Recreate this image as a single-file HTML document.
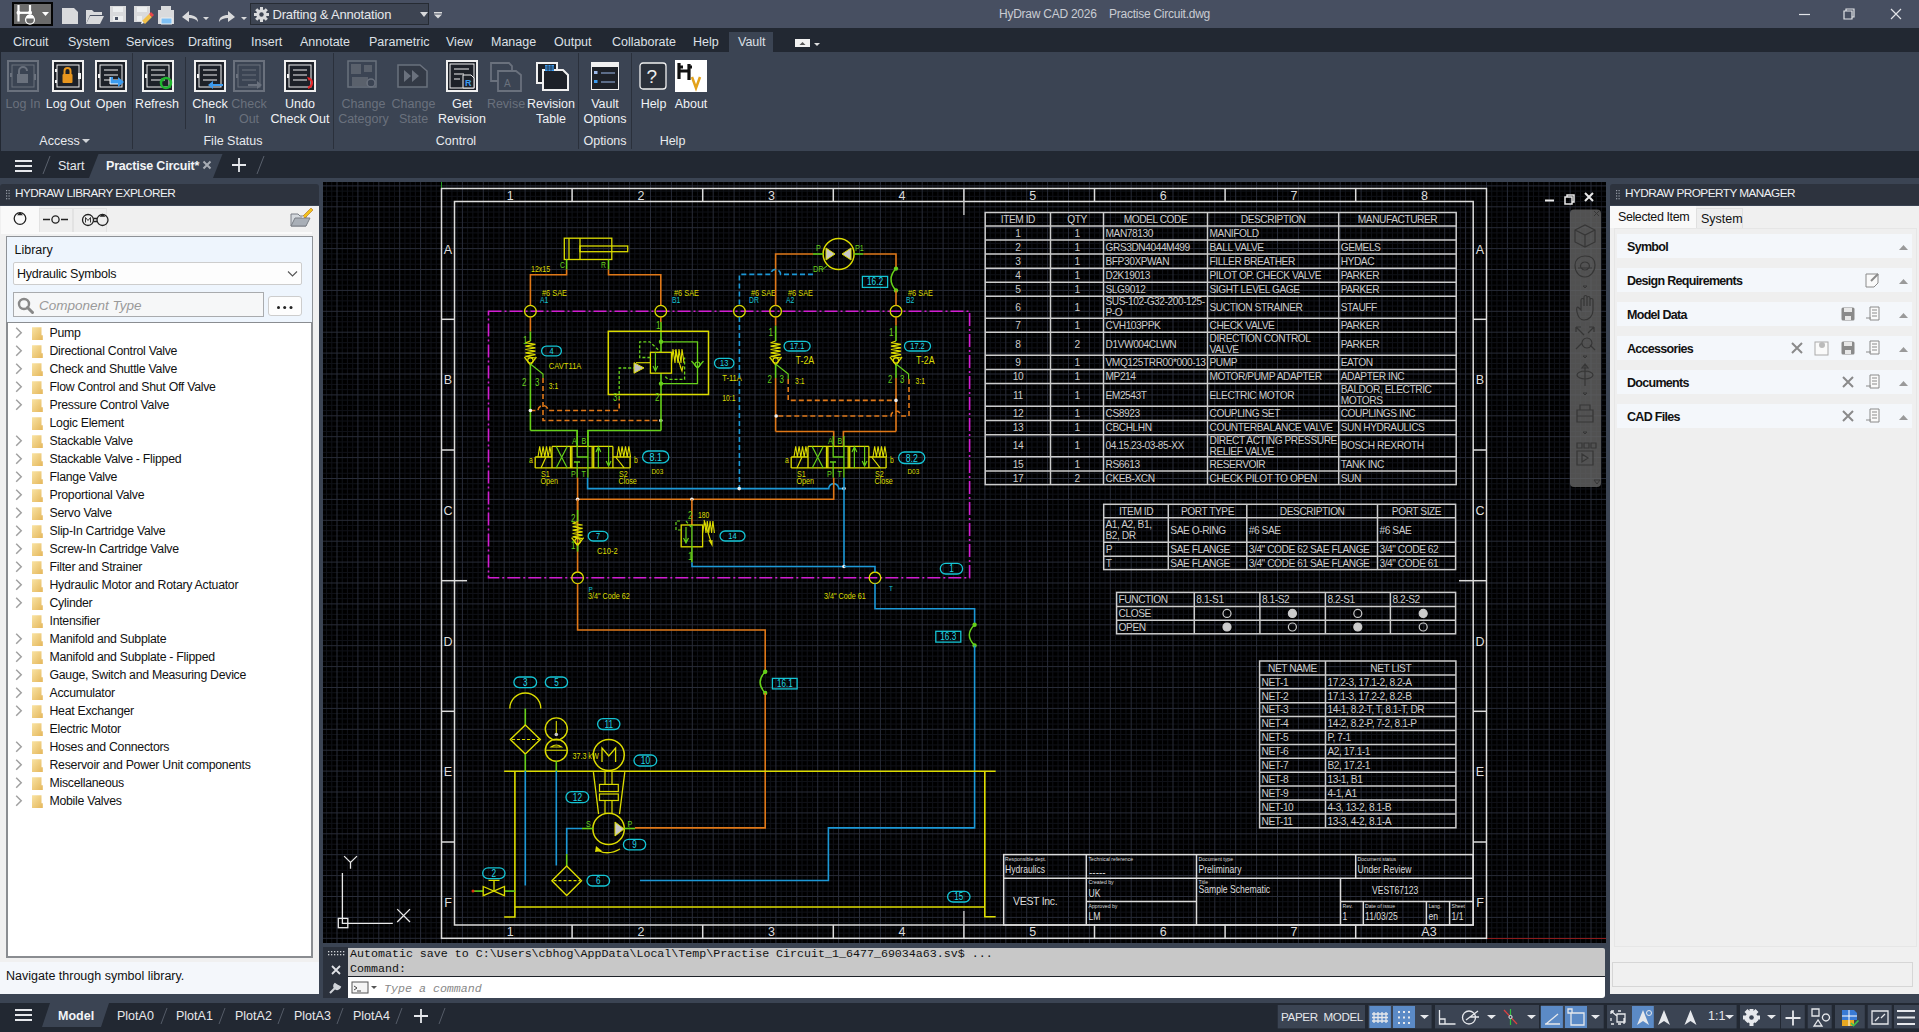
<!DOCTYPE html><html><head><meta charset="utf-8"><style>
*{margin:0;padding:0;box-sizing:border-box}
html,body{width:1919px;height:1032px;overflow:hidden;background:#3b4453;font-family:"Liberation Sans",sans-serif}
.a{position:absolute}
.t{position:absolute;white-space:nowrap;line-height:1}
</style></head><body>
<div class="a" style="left:0px;top:0px;width:1919px;height:28px;background:#474f61"></div><div class="a" style="left:12px;top:2px;width:41px;height:24px;background:#6b6b6b;border:2px solid #050505"></div><svg class="a" style="left:60px;top:4px;" width="385" height="22" viewBox="0 0 385 22"><g fill="#d9dadc">
<path d="M2 4h12l4 4v12H2z"/>
<path d="M26 6h6l2 2h8v3H30l-4 9z"/><path d="M30 12h14l-4 8H26z"/>
<path d="M50 2h16v16H50z"/>
<path d="M74 2h16v11l-5 5H74z"/>
<path d="M98 6h16v14H98z"/><path d="M101 2h10v4h-10z"/>
<path d="M122 13l7-6v4c5 0 9 2 9 7c-2-3-5-4-9-4v4z"/>
<path d="M175 13l-7-6v4c-5 0-9 2-9 7c2-3 5-4 9-4v4z"/>
</g><g fill="#eceeef"><path d="M53 3h10v5H53z"/><path d="M53 12h10v5H53z"/><path d="M77 3h10v5H77z"/><path d="M77 12h5v5h-5z"/></g>
<path d="M55 13h3v3h-3z" fill="#474f61"/>
<path d="M101 14h11v6h-11z" fill="#7fc0f4" stroke="#eceeef" stroke-width="1"/>
<path d="M143 13h6l-3 3z M181 13h6l-3 3z" fill="#d9dadc"/>
<path d="M82 17l7-7 3 3-7 7z" fill="#f2c14a"/><path d="M89 10l2-2 3 3-2 2z" fill="#e8454a"/><path d="M82 17l-1 3 3-1z" fill="#fff"/></svg><svg class="a" style="left:12px;top:2px;" width="41" height="24" viewBox="0 0 41 24"><g stroke="#fff" fill="none"><path d="M6.5 3v16.5M18 3v9" stroke-width="2.2"/><path d="M5 10.8h14.5" stroke-width="2.2"/><circle cx="18" cy="17.8" r="4.4" stroke-width="1.3"/></g><circle cx="6.5" cy="10.8" r="2" fill="#fff"/><circle cx="18" cy="10.8" r="2" fill="#fff"/><path d="M14 16.5h8a4 4 0 0 0 -8 0z" fill="#fff"/><path d="M30 10h7l-3.5 4z" fill="#fff"/></svg><div class="a" style="left:250px;top:3px;width:179px;height:22px;background:#3d4452;border:1px solid #262b33"></div><svg class="a" style="left:253px;top:6px;" width="17" height="17" viewBox="0 0 17 17"><g fill="#d9dadc"><circle cx="8.5" cy="8.5" r="5.2"/><g stroke="#d9dadc" stroke-width="3"><path d="M8.5 1v15M1 8.5h15M3.2 3.2l10.6 10.6M13.8 3.2L3.2 13.8"/></g><circle cx="8.5" cy="8.5" r="2.2" fill="#3d4452"/></g></svg><div class="t" style="left:272.5px;top:8.0px;font-size:13px;color:#e6e8ec;letter-spacing:-0.2px">Drafting &amp; Annotation</div><svg class="a" style="left:418px;top:10px;" width="24" height="10" viewBox="0 0 24 10"><path d="M2 2h8l-4 5z" fill="#d9dadc"/><path d="M16 2h8v1.5h-8zM16 4.5h8l-4 4z" fill="#d9dadc"/></svg><div class="t" style="left:999px;top:8.3px;font-size:12px;color:#c9ccd3;letter-spacing:-0.25px">HyDraw CAD 2026&nbsp;&nbsp;&nbsp; Practise Circuit.dwg</div><svg class="a" style="left:1796px;top:6px;" width="110" height="16" viewBox="0 0 110 16"><g stroke="#e2e4e8" stroke-width="1.2" fill="none"><path d="M3 8.5h11"/><path d="M48 5h8v8h-8z M50 5V3h8v8h-2"/><path d="M95 3l10 10M105 3L95 13"/></g></svg><div class="a" style="left:0px;top:28px;width:1919px;height:24px;background:#222832"></div><div class="a" style="left:729px;top:32px;width:44px;height:20px;background:#3b4453"></div><div class="t" style="left:13px;top:36.2px;font-size:12.5px;color:#dde0e6">Circuit</div><div class="t" style="left:68px;top:36.2px;font-size:12.5px;color:#dde0e6">System</div><div class="t" style="left:126px;top:36.2px;font-size:12.5px;color:#dde0e6">Services</div><div class="t" style="left:188px;top:36.2px;font-size:12.5px;color:#dde0e6">Drafting</div><div class="t" style="left:251px;top:36.2px;font-size:12.5px;color:#dde0e6">Insert</div><div class="t" style="left:300px;top:36.2px;font-size:12.5px;color:#dde0e6">Annotate</div><div class="t" style="left:369px;top:36.2px;font-size:12.5px;color:#dde0e6">Parametric</div><div class="t" style="left:446px;top:36.2px;font-size:12.5px;color:#dde0e6">View</div><div class="t" style="left:491px;top:36.2px;font-size:12.5px;color:#dde0e6">Manage</div><div class="t" style="left:554px;top:36.2px;font-size:12.5px;color:#dde0e6">Output</div><div class="t" style="left:612px;top:36.2px;font-size:12.5px;color:#dde0e6">Collaborate</div><div class="t" style="left:693px;top:36.2px;font-size:12.5px;color:#dde0e6">Help</div><div class="t" style="left:738px;top:36.2px;font-size:12.5px;color:#dde0e6">Vault</div><div class="a" style="left:795px;top:39px;width:15px;height:8px;background:#f2f2f2"></div><svg class="a" style="left:795px;top:39px;" width="26" height="10" viewBox="0 0 26 10"><path d="M4.5 6h6l-3-3z" fill="#555"/><path d="M19 4h6l-3 3z" fill="#e0e0e0"/></svg><div class="a" style="left:0px;top:52px;width:1919px;height:99px;background:#3b4453"></div><div class="a" style="left:0px;top:52px;width:1px;height:99px;background:#222832"></div><div class="a" style="left:132px;top:53px;width:1px;height:96px;background:#2a303b"></div><div class="a" style="left:185px;top:57px;width:1px;height:72px;background:#2a303b"></div><div class="a" style="left:333px;top:53px;width:1px;height:96px;background:#2a303b"></div><div class="a" style="left:578px;top:53px;width:1px;height:96px;background:#2a303b"></div><div class="a" style="left:631px;top:53px;width:1px;height:96px;background:#2a303b"></div><svg class="a" style="left:7px;top:60px;" width="32" height="32" viewBox="0 0 32 32"><rect x="1" y="1" width="30" height="30" fill="#3b4453" stroke="#6a717d" stroke-width="2"/><rect x="5" y="5" width="22" height="22" fill="none" stroke="#6a717d"/><rect x="10" y="14" width="11" height="9" fill="#6a717d"/><path d="M12 14v-3a4 4 0 0 1 8 0" stroke="#6a717d" stroke-width="2" fill="none"/><path d="M3 13h2v4H3zM27 14h2v6h-2z" fill="#6a717d"/></svg><svg class="a" style="left:52px;top:60px;" width="32" height="32" viewBox="0 0 32 32"><rect x="1" y="1" width="30" height="30" fill="#1d2128" stroke="#f0f0f0" stroke-width="2"/><rect x="5" y="5" width="22" height="22" fill="none" stroke="#f0f0f0"/><rect x="10.5" y="14" width="10" height="9" rx="1" fill="#e8961e"/><path d="M12.5 14v-3a3 3 0 0 1 6 0v3" stroke="#e8961e" stroke-width="2" fill="none"/><path d="M3 9h2v3H3zM3 20h2v3H3zM26 13h3v6h-3z" fill="#f0f0f0"/></svg><svg class="a" style="left:95px;top:60px;" width="33" height="32" viewBox="0 0 33 32"><rect x="1" y="1" width="30" height="30" fill="#1d2128" stroke="#f0f0f0" stroke-width="2"/><rect x="5" y="5" width="22" height="22" fill="none" stroke="#f0f0f0" stroke-width="1"/><g stroke="#f0f0f0" stroke-width="1.2"><path d="M9 10h14M9 15h14M9 20h14"/></g><path d="M3 14h2v4H3z" fill="#f0f0f0"/><path d="M15 17v7h8v3l6-5-6-5v3h-5v-3z" fill="#3c9cf0"/><path d="M15 17v7h8" stroke="#fff" stroke-width="1" fill="none"/></svg><svg class="a" style="left:142px;top:60px;" width="32" height="32" viewBox="0 0 32 32"><rect x="1" y="1" width="30" height="30" fill="#1d2128" stroke="#f0f0f0" stroke-width="2"/><rect x="5" y="5" width="22" height="22" fill="none" stroke="#f0f0f0" stroke-width="1"/><g stroke="#f0f0f0" stroke-width="1.2"><path d="M9 10h14M9 15h14M9 20h14"/></g><path d="M3 14h2v4H3z" fill="#f0f0f0"/><circle cx="24" cy="23" r="5" fill="none" stroke="#1fb52e" stroke-width="2.5"/><path d="M19 18l4 0-2 4zM29 28l-4 0 2-4z" fill="#1fb52e"/></svg><svg class="a" style="left:194px;top:60px;" width="32" height="32" viewBox="0 0 32 32"><rect x="1" y="1" width="30" height="30" fill="#1d2128" stroke="#f0f0f0" stroke-width="2"/><rect x="5" y="5" width="22" height="22" fill="none" stroke="#f0f0f0" stroke-width="1"/><g stroke="#f0f0f0" stroke-width="1.2"><path d="M9 10h14M9 15h14M9 20h14"/></g><path d="M3 14h2v4H3z" fill="#f0f0f0"/><path d="M14 25l5-4v3h10v2H19v3z" fill="#3c9cf0"/></svg><svg class="a" style="left:233px;top:60px;" width="32" height="32" viewBox="0 0 32 32"><rect x="1" y="1" width="30" height="30" fill="#3b4453" stroke="#6a717d" stroke-width="2"/><rect x="5" y="5" width="22" height="22" fill="none" stroke="#6a717d" stroke-width="1"/><g stroke="#6a717d" stroke-width="1.2"><path d="M9 10h14M9 15h14M9 20h14"/></g><path d="M3 14h2v4H3z" fill="#6a717d"/><path d="M29 25l-5-4v3H15v2h9v3z" fill="#6a717d"/></svg><svg class="a" style="left:284px;top:60px;" width="32" height="32" viewBox="0 0 32 32"><rect x="1" y="1" width="30" height="30" fill="#1d2128" stroke="#f0f0f0" stroke-width="2"/><rect x="5" y="5" width="22" height="22" fill="none" stroke="#f0f0f0" stroke-width="1"/><g stroke="#f0f0f0" stroke-width="1.2"><path d="M9 10h14M9 15h14M9 20h14"/></g><path d="M3 14h2v4H3z" fill="#f0f0f0"/><path d="M26 19c3 2 3 7-2 9" stroke="#e8272a" stroke-width="2" fill="none"/><path d="M23 17l4 1-2 3z" fill="#e8272a"/></svg><svg class="a" style="left:347px;top:60px;" width="31" height="30" viewBox="0 0 31 30"><g fill="none" stroke="#6a717d" stroke-width="1.5"><rect x="1" y="1" width="28" height="26"/></g><g fill="#5a616c"><rect x="4" y="4" width="10" height="10"/><rect x="17" y="5" width="8" height="7"/><rect x="5" y="17" width="16" height="9"/></g><circle cx="24" cy="23" r="4" fill="none" stroke="#6a717d" stroke-width="1.5"/></svg><svg class="a" style="left:397px;top:64px;" width="32" height="24" viewBox="0 0 32 24"><path d="M1 1h22l7 6v16H1z" fill="#333a46" stroke="#6a717d" stroke-width="1.5"/><path d="M7 6l7 6-7 6zM15 6l7 6-7 6z" fill="#6a717d"/></svg><svg class="a" style="left:446px;top:60px;" width="32" height="32" viewBox="0 0 32 32"><rect x="1" y="1" width="30" height="30" fill="#1d2128" stroke="#f0f0f0" stroke-width="2"/><rect x="4" y="4" width="24" height="24" fill="none" stroke="#f0f0f0"/><g stroke="#f0f0f0" stroke-width="1"><path d="M8 9h15M8 14h10M8 19h6"/></g><path d="M17 15h8l3 3v10H17z" fill="#1d2128" stroke="#f0f0f0"/><text x="19" y="26" font-size="9" font-weight="bold" fill="#3c9cf0" font-family="Liberation Sans">R</text></svg><svg class="a" style="left:489px;top:60px;" width="34" height="32" viewBox="0 0 34 32"><g fill="none" stroke="#6a717d" stroke-width="1.8"><path d="M2 3h18l3 3v15H2z"/><path d="M9 11h18l5 4v16H9z" fill="#3b4453"/></g><text x="15" y="27" font-size="10" fill="#6a717d" font-family="Liberation Sans">A</text></svg><svg class="a" style="left:535px;top:61px;" width="34" height="31" viewBox="0 0 34 31"><path d="M2 2h20v20H2z" fill="#1d2128" stroke="#f0f0f0" stroke-width="2"/><path d="M8 9h20l5 5v15H8z" fill="#1d2128" stroke="#f0f0f0" stroke-width="2"/><g fill="#3c9cf0"><rect x="10" y="4" width="9" height="6"/></g><g stroke="#1d2128" stroke-width=".7"><path d="M10 6h9M10 8h9M13 4v6M16 4v6"/></g></svg><svg class="a" style="left:591px;top:62px;" width="28" height="28" viewBox="0 0 28 28"><rect x="0.5" y="0.5" width="27" height="27" fill="#1d2128" stroke="#f0f0f0"/><rect x="0" y="0" width="28" height="5" fill="#f0f0f0"/><rect x="3" y="9" width="3.5" height="3" fill="#9bb8e8"/><rect x="3" y="18" width="3.5" height="3" fill="#3c9cf0"/><path d="M10 11h14M10 20h14" stroke="#9bb8e8" stroke-width="1"/></svg><svg class="a" style="left:639px;top:62px;" width="28" height="28" viewBox="0 0 28 28"><rect x="1" y="1" width="26" height="26" rx="3" fill="#2a303a" stroke="#f0f0f0" stroke-width="1.3"/><text x="7.5" y="21" font-size="19" fill="#f0f0f0" font-family="Liberation Sans">?</text></svg><svg class="a" style="left:675px;top:60px;" width="32" height="32" viewBox="0 0 32 32"><rect width="32" height="32" fill="#fff"/><path d="M4 3v16M4 7h4M14 4v16M13 7h4M5 11h10" stroke="#111" stroke-width="3.2"/><path d="M17 17l4 11 4-11" stroke="#e3a21a" stroke-width="2.5" fill="none"/></svg><div class="t" style="left:-27.0px;top:97.6px;width:100px;text-align:center;font-size:12.5px;color:#6a717d">Log In</div><div class="t" style="left:18.0px;top:97.6px;width:100px;text-align:center;font-size:12.5px;color:#f0f2f5">Log Out</div><div class="t" style="left:61.0px;top:97.6px;width:100px;text-align:center;font-size:12.5px;color:#f0f2f5">Open</div><div class="t" style="left:107.0px;top:97.6px;width:100px;text-align:center;font-size:12.5px;color:#f0f2f5">Refresh</div><div class="t" style="left:160.0px;top:97.6px;width:100px;text-align:center;font-size:12.5px;color:#f0f2f5">Check</div><div class="t" style="left:160.0px;top:112.6px;width:100px;text-align:center;font-size:12.5px;color:#f0f2f5">In</div><div class="t" style="left:199.0px;top:97.6px;width:100px;text-align:center;font-size:12.5px;color:#6a717d">Check</div><div class="t" style="left:199.0px;top:112.6px;width:100px;text-align:center;font-size:12.5px;color:#6a717d">Out</div><div class="t" style="left:250.0px;top:97.6px;width:100px;text-align:center;font-size:12.5px;color:#f0f2f5">Undo</div><div class="t" style="left:250.0px;top:112.6px;width:100px;text-align:center;font-size:12.5px;color:#f0f2f5">Check Out</div><div class="t" style="left:313.5px;top:97.6px;width:100px;text-align:center;font-size:12.5px;color:#6a717d">Change</div><div class="t" style="left:313.5px;top:112.6px;width:100px;text-align:center;font-size:12.5px;color:#6a717d">Category</div><div class="t" style="left:363.5px;top:97.6px;width:100px;text-align:center;font-size:12.5px;color:#6a717d">Change</div><div class="t" style="left:363.5px;top:112.6px;width:100px;text-align:center;font-size:12.5px;color:#6a717d">State</div><div class="t" style="left:412.0px;top:97.6px;width:100px;text-align:center;font-size:12.5px;color:#f0f2f5">Get</div><div class="t" style="left:412.0px;top:112.6px;width:100px;text-align:center;font-size:12.5px;color:#f0f2f5">Revision</div><div class="t" style="left:456.0px;top:97.6px;width:100px;text-align:center;font-size:12.5px;color:#6a717d">Revise</div><div class="t" style="left:501.0px;top:97.6px;width:100px;text-align:center;font-size:12.5px;color:#f0f2f5">Revision</div><div class="t" style="left:501.0px;top:112.6px;width:100px;text-align:center;font-size:12.5px;color:#f0f2f5">Table</div><div class="t" style="left:555.0px;top:97.6px;width:100px;text-align:center;font-size:12.5px;color:#f0f2f5">Vault</div><div class="t" style="left:555.0px;top:112.6px;width:100px;text-align:center;font-size:12.5px;color:#f0f2f5">Options</div><div class="t" style="left:603.5px;top:97.6px;width:100px;text-align:center;font-size:12.5px;color:#f0f2f5">Help</div><div class="t" style="left:641.0px;top:97.6px;width:100px;text-align:center;font-size:12.5px;color:#f0f2f5">About</div><div class="t" style="left:9.5px;top:135.4px;width:100px;text-align:center;font-size:12.5px;color:#e8eaee">Access</div><div class="t" style="left:183.0px;top:135.4px;width:100px;text-align:center;font-size:12.5px;color:#e8eaee">File Status</div><div class="t" style="left:406.0px;top:135.4px;width:100px;text-align:center;font-size:12.5px;color:#e8eaee">Control</div><div class="t" style="left:555.0px;top:135.4px;width:100px;text-align:center;font-size:12.5px;color:#e8eaee">Options</div><div class="t" style="left:622.5px;top:135.4px;width:100px;text-align:center;font-size:12.5px;color:#e8eaee">Help</div><svg class="a" style="left:82px;top:138px;" width="8" height="6" viewBox="0 0 8 6"><path d="M0 1h8l-4 4z" fill="#d0d3d8"/></svg><div class="a" style="left:0px;top:151px;width:1919px;height:27px;background:#222832"></div><svg class="a" style="left:0px;top:151px;" width="280" height="27" viewBox="0 0 280 27"><path d="M89 27L98.5 3H222.5L213 27z" fill="#3b4453"/><g stroke="#5a616d" stroke-width="1"><path d="M43 23l7-18M257 23l7-18"/></g></svg><svg class="a" style="left:15px;top:160px;" width="19" height="12" viewBox="0 0 19 12"><g fill="#e6e8ec"><rect y="0" width="17" height="2"/><rect y="5" width="17" height="2"/><rect y="10" width="17" height="2"/></g></svg><div class="t" style="left:58px;top:160.4px;font-size:12.5px;color:#e6e8ec">Start</div><div class="t" style="left:106px;top:160.4px;font-size:12.5px;color:#f2f4f7;font-weight:bold;letter-spacing:-0.2px">Practise Circuit*</div><svg class="a" style="left:201px;top:159px;" width="12" height="12" viewBox="0 0 12 12"><path d="M2.5 2.5l7 7M9.5 2.5l-7 7" stroke="#a8adb5" stroke-width="2"/></svg><svg class="a" style="left:231px;top:157px;" width="16" height="16" viewBox="0 0 16 16"><path d="M8 1v14M1 8h14" stroke="#e6e8ec" stroke-width="1.8"/></svg><div class="a" style="left:0px;top:184px;width:319px;height:22px;background:#2d333e;border-radius:3px 3px 0 0;border-bottom:1px solid #3a4352"></div><svg class="a" style="left:6px;top:190px;" width="4" height="10" viewBox="0 0 4 10"><g fill="#9aa0aa"><rect x="0" y="0" width="1.2" height="1.2"/><rect x="2.5" y="0" width="1.2" height="1.2"/><rect x="0" y="2.7" width="1.2" height="1.2"/><rect x="2.5" y="2.7" width="1.2" height="1.2"/><rect x="0" y="5.4" width="1.2" height="1.2"/><rect x="2.5" y="5.4" width="1.2" height="1.2"/><rect x="0" y="8.1" width="1.2" height="1.2"/><rect x="2.5" y="8.1" width="1.2" height="1.2"/></g></svg><div class="t" style="left:15px;top:187.5px;font-size:11.8px;color:#eef0f3;letter-spacing:-0.55px">HYDRAW LIBRARY EXPLORER</div><div class="a" style="left:0px;top:206px;width:319px;height:788px;background:#f0f0f0"></div><div class="a" style="left:1px;top:206px;width:38px;height:26px;background:#f9f9f9"></div><div class="a" style="left:39px;top:208px;width:34px;height:24px;background:#eeeeee;border:1px solid #e2e2e2;border-bottom:none"></div><div class="a" style="left:73px;top:208px;width:34px;height:24px;background:#eeeeee;border:1px solid #e2e2e2;border-bottom:none"></div><svg class="a" style="left:10px;top:210px;" width="100" height="20" viewBox="0 0 100 20"><g fill="none" stroke="#222" stroke-width="1.3"><circle cx="10" cy="8.5" r="5.8"/><path d="M33 9.5h7M51 9.5h7"/><circle cx="45.5" cy="9.5" r="3.6"/><circle cx="78" cy="10" r="5.5"/><circle cx="92.5" cy="10" r="5.5"/><path d="M83.5 8.5h3.5M83.5 11.5h3.5"/></g><path d="M7 5.3h6l-3-3z M89.5 6.8h6l-3-3z" fill="#222"/><path d="M75.5 12.5v-5l2.5 3 2.5-3v5" stroke="#222" stroke-width=".9" fill="none"/></svg><div class="a" style="left:1px;top:232px;width:311px;height:2px;background:#fafafa"></div><svg class="a" style="left:287px;top:206px;" width="28" height="26" viewBox="0 0 28 26"><path d="M4 8h7l2 2h6v10H4z" fill="#d5d9de" stroke="#7a7f86"/><path d="M4 20l4-8h15l-4 8z" fill="#a9afb7" stroke="#7a7f86"/><path d="M16 10l8-8 2 2-8 8z" fill="#f2c21b" stroke="#b06a1a" stroke-width=".6"/><path d="M16 10l-1 2 2-1z" fill="#fff"/></svg><div class="a" style="left:6px;top:236px;width:307px;height:87px;background:#eef5fd;border:1px solid #8e9297;border-bottom:none"></div><div class="t" style="left:14.5px;top:244.4px;font-size:12.5px;color:#111">Library</div><div class="a" style="left:13px;top:262px;width:289px;height:23px;background:#fdfdfd;border:1px solid #cdcdcd;border-radius:2px"></div><div class="t" style="left:17px;top:268.4px;font-size:12.5px;color:#111;letter-spacing:-0.25px">Hydraulic Symbols</div><svg class="a" style="left:287px;top:270px;" width="12" height="8" viewBox="0 0 12 8"><path d="M1 1.5l4.5 4.5 4.5-4.5" stroke="#555" stroke-width="1.1" fill="none"/></svg><div class="a" style="left:13px;top:292px;width:251px;height:25px;background:#f6f7f8;border:1px solid #a9abae"></div><svg class="a" style="left:17px;top:297px;" width="18" height="18" viewBox="0 0 18 18"><circle cx="7" cy="7" r="5" stroke="#888" stroke-width="2.4" fill="none"/><path d="M10.5 10.5l5 5" stroke="#888" stroke-width="3" stroke-linecap="round"/></svg><div class="t" style="left:39px;top:298.6px;font-size:13.5px;color:#9a9a9a;font-style:italic">Component Type</div><div class="a" style="left:268px;top:296px;width:34px;height:20px;background:#fdfdfd;border:1px solid #cdcdcd;border-radius:3px"></div><svg class="a" style="left:276px;top:305px;" width="18" height="5" viewBox="0 0 18 5"><g fill="#222"><circle cx="2.5" cy="2.5" r="1.5"/><circle cx="8.7" cy="2.5" r="1.5"/><circle cx="15" cy="2.5" r="1.5"/></g></svg><div class="a" style="left:6px;top:322px;width:307px;height:636px;background:#fff;border:2px solid #8a8d91;border-top:1px solid #8a8d91"></div><div class="t" style="left:49.5px;top:326.9px;font-size:12.3px;color:#111;letter-spacing:-0.27px">Pump</div><div class="t" style="left:49.5px;top:344.9px;font-size:12.3px;color:#111;letter-spacing:-0.27px">Directional Control Valve</div><div class="t" style="left:49.5px;top:362.9px;font-size:12.3px;color:#111;letter-spacing:-0.27px">Check and Shuttle Valve</div><div class="t" style="left:49.5px;top:380.9px;font-size:12.3px;color:#111;letter-spacing:-0.27px">Flow Control and Shut Off Valve</div><div class="t" style="left:49.5px;top:398.9px;font-size:12.3px;color:#111;letter-spacing:-0.27px">Pressure Control Valve</div><div class="t" style="left:49.5px;top:416.9px;font-size:12.3px;color:#111;letter-spacing:-0.27px">Logic Element</div><div class="t" style="left:49.5px;top:434.9px;font-size:12.3px;color:#111;letter-spacing:-0.27px">Stackable Valve</div><div class="t" style="left:49.5px;top:452.9px;font-size:12.3px;color:#111;letter-spacing:-0.27px">Stackable Valve - Flipped</div><div class="t" style="left:49.5px;top:470.9px;font-size:12.3px;color:#111;letter-spacing:-0.27px">Flange Valve</div><div class="t" style="left:49.5px;top:488.9px;font-size:12.3px;color:#111;letter-spacing:-0.27px">Proportional Valve</div><div class="t" style="left:49.5px;top:506.9px;font-size:12.3px;color:#111;letter-spacing:-0.27px">Servo Valve</div><div class="t" style="left:49.5px;top:524.9px;font-size:12.3px;color:#111;letter-spacing:-0.27px">Slip-In Cartridge Valve</div><div class="t" style="left:49.5px;top:542.9px;font-size:12.3px;color:#111;letter-spacing:-0.27px">Screw-In Cartridge Valve</div><div class="t" style="left:49.5px;top:560.9px;font-size:12.3px;color:#111;letter-spacing:-0.27px">Filter and Strainer</div><div class="t" style="left:49.5px;top:578.9px;font-size:12.3px;color:#111;letter-spacing:-0.27px">Hydraulic Motor and Rotary Actuator</div><div class="t" style="left:49.5px;top:596.9px;font-size:12.3px;color:#111;letter-spacing:-0.27px">Cylinder</div><div class="t" style="left:49.5px;top:614.9px;font-size:12.3px;color:#111;letter-spacing:-0.27px">Intensifier</div><div class="t" style="left:49.5px;top:632.9px;font-size:12.3px;color:#111;letter-spacing:-0.27px">Manifold and Subplate</div><div class="t" style="left:49.5px;top:650.9px;font-size:12.3px;color:#111;letter-spacing:-0.27px">Manifold and Subplate - Flipped</div><div class="t" style="left:49.5px;top:668.9px;font-size:12.3px;color:#111;letter-spacing:-0.27px">Gauge, Switch and Measuring Device</div><div class="t" style="left:49.5px;top:686.9px;font-size:12.3px;color:#111;letter-spacing:-0.27px">Accumulator</div><div class="t" style="left:49.5px;top:704.9px;font-size:12.3px;color:#111;letter-spacing:-0.27px">Heat Exchanger</div><div class="t" style="left:49.5px;top:722.9px;font-size:12.3px;color:#111;letter-spacing:-0.27px">Electric Motor</div><div class="t" style="left:49.5px;top:740.9px;font-size:12.3px;color:#111;letter-spacing:-0.27px">Hoses and Connectors</div><div class="t" style="left:49.5px;top:758.9px;font-size:12.3px;color:#111;letter-spacing:-0.27px">Reservoir and Power Unit components</div><div class="t" style="left:49.5px;top:776.9px;font-size:12.3px;color:#111;letter-spacing:-0.27px">Miscellaneous</div><div class="t" style="left:49.5px;top:794.9px;font-size:12.3px;color:#111;letter-spacing:-0.27px">Mobile Valves</div><svg class="a" style="left:0px;top:0px;" width="60" height="900" viewBox="0 0 60 900"><defs><linearGradient id="fg" x1="0" y1="0" x2="1" y2="1"><stop offset="0" stop-color="#f9e3a3"/><stop offset="1" stop-color="#e4b65a"/></linearGradient></defs><path d="M16.2 327.7l5 5-5 5" stroke="#a0a0a0" stroke-width="1.5" fill="none"/><path d="M32 327.2h9.5v8h1.3v4.9h-10.8z" fill="url(#fg)"/><path d="M16.2 345.7l5 5-5 5" stroke="#a0a0a0" stroke-width="1.5" fill="none"/><path d="M32 345.2h9.5v8h1.3v4.9h-10.8z" fill="url(#fg)"/><path d="M16.2 363.7l5 5-5 5" stroke="#a0a0a0" stroke-width="1.5" fill="none"/><path d="M32 363.2h9.5v8h1.3v4.9h-10.8z" fill="url(#fg)"/><path d="M16.2 381.7l5 5-5 5" stroke="#a0a0a0" stroke-width="1.5" fill="none"/><path d="M32 381.2h9.5v8h1.3v4.9h-10.8z" fill="url(#fg)"/><path d="M16.2 399.7l5 5-5 5" stroke="#a0a0a0" stroke-width="1.5" fill="none"/><path d="M32 399.2h9.5v8h1.3v4.9h-10.8z" fill="url(#fg)"/><path d="M32 417.2h9.5v8h1.3v4.9h-10.8z" fill="url(#fg)"/><path d="M16.2 435.7l5 5-5 5" stroke="#a0a0a0" stroke-width="1.5" fill="none"/><path d="M32 435.2h9.5v8h1.3v4.9h-10.8z" fill="url(#fg)"/><path d="M16.2 453.7l5 5-5 5" stroke="#a0a0a0" stroke-width="1.5" fill="none"/><path d="M32 453.2h9.5v8h1.3v4.9h-10.8z" fill="url(#fg)"/><path d="M16.2 471.7l5 5-5 5" stroke="#a0a0a0" stroke-width="1.5" fill="none"/><path d="M32 471.2h9.5v8h1.3v4.9h-10.8z" fill="url(#fg)"/><path d="M16.2 489.7l5 5-5 5" stroke="#a0a0a0" stroke-width="1.5" fill="none"/><path d="M32 489.2h9.5v8h1.3v4.9h-10.8z" fill="url(#fg)"/><path d="M16.2 507.7l5 5-5 5" stroke="#a0a0a0" stroke-width="1.5" fill="none"/><path d="M32 507.2h9.5v8h1.3v4.9h-10.8z" fill="url(#fg)"/><path d="M16.2 525.7l5 5-5 5" stroke="#a0a0a0" stroke-width="1.5" fill="none"/><path d="M32 525.2h9.5v8h1.3v4.9h-10.8z" fill="url(#fg)"/><path d="M16.2 543.7l5 5-5 5" stroke="#a0a0a0" stroke-width="1.5" fill="none"/><path d="M32 543.2h9.5v8h1.3v4.9h-10.8z" fill="url(#fg)"/><path d="M16.2 561.7l5 5-5 5" stroke="#a0a0a0" stroke-width="1.5" fill="none"/><path d="M32 561.2h9.5v8h1.3v4.9h-10.8z" fill="url(#fg)"/><path d="M16.2 579.7l5 5-5 5" stroke="#a0a0a0" stroke-width="1.5" fill="none"/><path d="M32 579.2h9.5v8h1.3v4.9h-10.8z" fill="url(#fg)"/><path d="M16.2 597.7l5 5-5 5" stroke="#a0a0a0" stroke-width="1.5" fill="none"/><path d="M32 597.2h9.5v8h1.3v4.9h-10.8z" fill="url(#fg)"/><path d="M32 615.2h9.5v8h1.3v4.9h-10.8z" fill="url(#fg)"/><path d="M16.2 633.7l5 5-5 5" stroke="#a0a0a0" stroke-width="1.5" fill="none"/><path d="M32 633.2h9.5v8h1.3v4.9h-10.8z" fill="url(#fg)"/><path d="M16.2 651.7l5 5-5 5" stroke="#a0a0a0" stroke-width="1.5" fill="none"/><path d="M32 651.2h9.5v8h1.3v4.9h-10.8z" fill="url(#fg)"/><path d="M16.2 669.7l5 5-5 5" stroke="#a0a0a0" stroke-width="1.5" fill="none"/><path d="M32 669.2h9.5v8h1.3v4.9h-10.8z" fill="url(#fg)"/><path d="M16.2 687.7l5 5-5 5" stroke="#a0a0a0" stroke-width="1.5" fill="none"/><path d="M32 687.2h9.5v8h1.3v4.9h-10.8z" fill="url(#fg)"/><path d="M16.2 705.7l5 5-5 5" stroke="#a0a0a0" stroke-width="1.5" fill="none"/><path d="M32 705.2h9.5v8h1.3v4.9h-10.8z" fill="url(#fg)"/><path d="M32 723.2h9.5v8h1.3v4.9h-10.8z" fill="url(#fg)"/><path d="M16.2 741.7l5 5-5 5" stroke="#a0a0a0" stroke-width="1.5" fill="none"/><path d="M32 741.2h9.5v8h1.3v4.9h-10.8z" fill="url(#fg)"/><path d="M16.2 759.7l5 5-5 5" stroke="#a0a0a0" stroke-width="1.5" fill="none"/><path d="M32 759.2h9.5v8h1.3v4.9h-10.8z" fill="url(#fg)"/><path d="M16.2 777.7l5 5-5 5" stroke="#a0a0a0" stroke-width="1.5" fill="none"/><path d="M32 777.2h9.5v8h1.3v4.9h-10.8z" fill="url(#fg)"/><path d="M16.2 795.7l5 5-5 5" stroke="#a0a0a0" stroke-width="1.5" fill="none"/><path d="M32 795.2h9.5v8h1.3v4.9h-10.8z" fill="url(#fg)"/></svg><div class="a" style="left:0px;top:962px;width:319px;height:32px;background:#f4f7fb"></div><div class="a" style="left:0px;top:958px;width:319px;height:4px;background:#f0f0f0"></div><div class="t" style="left:6px;top:969.9px;font-size:12.5px;color:#111">Navigate through symbol library.</div><div class="a" style="left:1610px;top:184px;width:309px;height:22px;background:#2d333e;border-radius:3px 0 0 0;border-bottom:1px solid #3a4352"></div><svg class="a" style="left:1616px;top:190px;" width="4" height="10" viewBox="0 0 4 10"><g fill="#9aa0aa"><rect x="0" y="0" width="1.2" height="1.2"/><rect x="2.5" y="0" width="1.2" height="1.2"/><rect x="0" y="2.7" width="1.2" height="1.2"/><rect x="2.5" y="2.7" width="1.2" height="1.2"/><rect x="0" y="5.4" width="1.2" height="1.2"/><rect x="2.5" y="5.4" width="1.2" height="1.2"/><rect x="0" y="8.1" width="1.2" height="1.2"/><rect x="2.5" y="8.1" width="1.2" height="1.2"/></g></svg><div class="t" style="left:1625px;top:187.5px;font-size:11.8px;color:#eef0f3;letter-spacing:-0.55px">HYDRAW PROPERTY MANAGER</div><div class="a" style="left:1610px;top:206px;width:309px;height:788px;background:#f0f0f0"></div><div class="a" style="left:1610px;top:206px;width:86px;height:22px;background:#f9f9f9"></div><div class="a" style="left:1696px;top:208px;width:47px;height:20px;background:#eeeeee;border:1px solid #e0e0e0;border-bottom:none"></div><div class="t" style="left:1618px;top:211.4px;font-size:12.5px;color:#111;letter-spacing:-0.4px">Selected Item</div><div class="t" style="left:1701px;top:213.4px;font-size:12.5px;color:#111">System</div><div class="a" style="left:1614px;top:228px;width:303px;height:719px;background:#efefef;border:1px solid #e6e6e6;border-top:1px solid #e6e6e6"></div><div class="a" style="left:1612px;top:962px;width:301px;height:25px;border:1px solid #d6d6d6"></div><div class="a" style="left:1617px;top:234px;width:295px;height:24px;background:#f4f7fb"></div><div class="t" style="left:1627px;top:240.6px;font-size:12.5px;color:#111;font-weight:bold;letter-spacing:-0.7px">Symbol</div><svg class="a" style="left:0;top:0" width="1919" height="1032"><path d="M1899 250h9l-4.5-5z" fill="#9a9a9a"/></svg><div class="a" style="left:1617px;top:268px;width:295px;height:24px;background:#f4f7fb"></div><div class="t" style="left:1627px;top:274.6px;font-size:12.5px;color:#111;font-weight:bold;letter-spacing:-0.7px">Design Requirements</div><svg class="a" style="left:0;top:0" width="1919" height="1032"><path d="M1899 284h9l-4.5-5z" fill="#9a9a9a"/><path d="M1866 274h12v9l-4 4h-8z" fill="#fafafa" stroke="#8a8a8a"/><path d="M1871 281l7-7" stroke="#8a8a8a" stroke-width="2"/></svg><div class="a" style="left:1617px;top:302px;width:295px;height:24px;background:#f4f7fb"></div><div class="t" style="left:1627px;top:308.6px;font-size:12.5px;color:#111;font-weight:bold;letter-spacing:-0.7px">Model Data</div><svg class="a" style="left:0;top:0" width="1919" height="1032"><path d="M1899 318h9l-4.5-5z" fill="#9a9a9a"/><rect x="1841.5" y="307.5" width="13" height="13" rx="1.5" fill="#8a8a8a"/><rect x="1844" y="308" width="8" height="4" fill="#e8e8e8"/><rect x="1845" y="316" width="6" height="4" fill="#e8e8e8"/><path d="M1870 307h9v13h-9z" fill="#fafafa" stroke="#8a8a8a"/><path d="M1872 310h5M1872 313h5M1872 316h5M1866 318h5" stroke="#8a8a8a"/></svg><div class="a" style="left:1617px;top:336px;width:295px;height:24px;background:#f4f7fb"></div><div class="t" style="left:1627px;top:342.6px;font-size:12.5px;color:#111;font-weight:bold;letter-spacing:-0.7px">Accessories</div><svg class="a" style="left:0;top:0" width="1919" height="1032"><path d="M1899 352h9l-4.5-5z" fill="#9a9a9a"/><path d="M1792 343l10 10M1802 343l-10 10" stroke="#8a8a8a" stroke-width="2"/><rect x="1815" y="342" width="13" height="13" fill="#fafafa" stroke="#aaa"/><circle cx="1822" cy="345" r="3" fill="#bbb"/><rect x="1841.5" y="341.5" width="13" height="13" rx="1.5" fill="#8a8a8a"/><rect x="1844" y="342" width="8" height="4" fill="#e8e8e8"/><rect x="1845" y="350" width="6" height="4" fill="#e8e8e8"/><path d="M1870 341h9v13h-9z" fill="#fafafa" stroke="#8a8a8a"/><path d="M1872 344h5M1872 347h5M1872 350h5M1866 352h5" stroke="#8a8a8a"/></svg><div class="a" style="left:1617px;top:370px;width:295px;height:24px;background:#f4f7fb"></div><div class="t" style="left:1627px;top:376.6px;font-size:12.5px;color:#111;font-weight:bold;letter-spacing:-0.7px">Documents</div><svg class="a" style="left:0;top:0" width="1919" height="1032"><path d="M1899 386h9l-4.5-5z" fill="#9a9a9a"/><path d="M1843 377l10 10M1853 377l-10 10" stroke="#8a8a8a" stroke-width="2"/><path d="M1870 375h9v13h-9z" fill="#fafafa" stroke="#8a8a8a"/><path d="M1872 378h5M1872 381h5M1872 384h5M1866 386h5" stroke="#8a8a8a"/></svg><div class="a" style="left:1617px;top:404px;width:295px;height:24px;background:#f4f7fb"></div><div class="t" style="left:1627px;top:410.6px;font-size:12.5px;color:#111;font-weight:bold;letter-spacing:-0.7px">CAD Files</div><svg class="a" style="left:0;top:0" width="1919" height="1032"><path d="M1899 420h9l-4.5-5z" fill="#9a9a9a"/><path d="M1843 411l10 10M1853 411l-10 10" stroke="#8a8a8a" stroke-width="2"/><path d="M1870 409h9v13h-9z" fill="#fafafa" stroke="#8a8a8a"/><path d="M1872 412h5M1872 415h5M1872 418h5M1866 420h5" stroke="#8a8a8a"/></svg><div class="a" style="left:323px;top:943px;width:1283px;height:60px;background:#3b4453"></div><div class="a" style="left:323px;top:947px;width:25px;height:51px;background:#2b313c"></div><svg class="a" style="left:326px;top:948px;" width="22" height="50" viewBox="0 0 22 50"><g fill="#d0d3d8"><rect x="2" y="3" width="1.3" height="1.3"/><rect x="5" y="3" width="1.3" height="1.3"/><rect x="8" y="3" width="1.3" height="1.3"/><rect x="11" y="3" width="1.3" height="1.3"/><rect x="14" y="3" width="1.3" height="1.3"/><rect x="17" y="3" width="1.3" height="1.3"/><rect x="2" y="6" width="1.3" height="1.3"/><rect x="5" y="6" width="1.3" height="1.3"/><rect x="8" y="6" width="1.3" height="1.3"/><rect x="11" y="6" width="1.3" height="1.3"/><rect x="14" y="6" width="1.3" height="1.3"/><rect x="17" y="6" width="1.3" height="1.3"/></g><path d="M6 18l8 8M14 18l-8 8" stroke="#e0e2e6" stroke-width="1.8"/><path d="M4 45l6-6M9 36a3 3 0 1 0 5 3l-2-1z" stroke="#d0d3d8" stroke-width="2" fill="#d0d3d8"/></svg><div class="a" style="left:348px;top:948px;width:1257px;height:29px;background:#c8c8c8;border-radius:0 2px 0 0"></div><div class="t" style="left:350px;top:947.6px;font-size:11.65px;color:#111;font-family:&quot;Liberation Mono&quot;,monospace">Automatic save to C:\Users\cbhog\AppData\Local\Temp\Practise Circuit_1_6477_69034a63.sv$ ...</div><div class="t" style="left:350px;top:962.6px;font-size:11.65px;color:#111;font-family:&quot;Liberation Mono&quot;,monospace">Command:</div><div class="a" style="left:348px;top:976px;width:1257px;height:1px;background:#1d2128"></div><div class="a" style="left:348px;top:977px;width:1257px;height:21px;background:#fff;border-radius:0 0 3px 0"></div><svg class="a" style="left:351px;top:981px;" width="30" height="13" viewBox="0 0 30 13"><rect x="1" y="1" width="16" height="11" fill="#f4f4f4" stroke="#555"/><path d="M3 5l3 2-3 2M6 10h4" stroke="#333" fill="none" stroke-width=".9"/><path d="M20 5h6l-3 3z" fill="#555"/></svg><div class="t" style="left:384px;top:982.6px;font-size:11.65px;color:#888;font-style:italic;font-family:&quot;Liberation Mono&quot;,monospace">Type a command</div><div class="a" style="left:0px;top:1003px;width:1919px;height:29px;background:#222832"></div><svg class="a" style="left:15px;top:1009px;" width="19" height="13" viewBox="0 0 19 13"><g fill="#e6e8ec"><rect y="0" width="17" height="2"/><rect y="5" width="17" height="2"/><rect y="10" width="17" height="2"/></g></svg><svg class="a" style="left:0px;top:1003px;" width="460" height="29" viewBox="0 0 460 29"><path d="M42 24L50 0H109L101 24z" fill="#3b4453"/><g stroke="#555c68" stroke-width="1"><path d="M161 21l6-16M219 21l6-16M278 21l6-16M337 21l6-16M396 21l6-16M439 21l6-16"/></g><path d="M421 6v14M414 13h14" stroke="#e6e8ec" stroke-width="1.8"/></svg><div class="t" style="left:58px;top:1009.9px;font-size:12.5px;color:#f2f4f7;font-weight:bold">Model</div><div class="t" style="left:117px;top:1009.9px;font-size:12.5px;color:#e6e8ec">PlotA0</div><div class="t" style="left:176px;top:1009.9px;font-size:12.5px;color:#e6e8ec">PlotA1</div><div class="t" style="left:235px;top:1009.9px;font-size:12.5px;color:#e6e8ec">PlotA2</div><div class="t" style="left:294px;top:1009.9px;font-size:12.5px;color:#e6e8ec">PlotA3</div><div class="t" style="left:353px;top:1009.9px;font-size:12.5px;color:#e6e8ec">PlotA4</div><svg class="a" style="left:0;top:0" width="1919" height="1032"><rect x="1277.7" y="1005" width="87.3" height="23.4" fill="#3b4453"/><rect x="1368.4" y="1005" width="63.2" height="23.4" fill="#3b4453"/><rect x="1435" y="1005" width="104.0" height="23.4" fill="#3b4453"/><rect x="1540.8" y="1005" width="62.9" height="23.4" fill="#3b4453"/><rect x="1607" y="1005" width="129.6" height="23.4" fill="#3b4453"/><rect x="1740" y="1005" width="40.0" height="23.4" fill="#3b4453"/><rect x="1781" y="1005" width="23.8" height="23.4" fill="#3b4453"/><rect x="1807.7" y="1005" width="24.0" height="23.4" fill="#3b4453"/><rect x="1835" y="1005" width="29.8" height="23.4" fill="#3b4453"/><rect x="1867.7" y="1005" width="24.0" height="23.4" fill="#3b4453"/><rect x="1894" y="1005" width="25.0" height="23.4" fill="#3b4453"/><rect x="1369.4" y="1006" width="21.5" height="22" fill="#5b8ac6"/><rect x="1393" y="1006" width="22.0" height="22" fill="#5b8ac6"/><rect x="1540.8" y="1006" width="22.1" height="22" fill="#5b8ac6"/><rect x="1565" y="1006" width="22.0" height="22" fill="#5b8ac6"/><rect x="1632" y="1006" width="21.8" height="22" fill="#5b8ac6"/><g stroke="#e6e8ec" stroke-width="1.3" fill="none"><path d="M1374 1012v11M1378 1012v11M1382 1012v11M1386 1012v11M1372 1014h16M1372 1017.5h16M1372 1021h16"/><path d="M1439.5 1010v14h16M1440 1019h5v5"/><circle cx="1469" cy="1017.5" r="6.5"/><path d="M1466 1020l12-9M1470 1017h9"/><path d="M1546 1024l12-10M1545 1024h15M1571 1013h13v12h-13zM1568 1009h4v4h-4z"/><path d="M1611 1011h3M1618 1011h3M1611 1024h3M1618 1024h3M1611 1011v3M1611 1018v3M1624 1018v3M1624 1024v-3M1617 1014h8v8h-8zM1611 1011l6 5"/><path d="M1793 1010.5v15M1785.5 1018h15" stroke-width="1.8"/><path d="M1812 1009h7v7h-7zM1818 1020l-4 6h8zM1826 1014a3.5 3.5 0 1 1 -.1 0"/><path d="M1872 1011h16v13h-16zM1875 1021l4-4M1885 1014l-4 4"/></g><g fill="#e6e8ec"><path d="M1398 1011h2v2h-2zM1403 1011h2v2h-2zM1408 1011h2v2h-2zM1398 1016.5h2v2h-2zM1403 1016.5h2v2h-2zM1408 1016.5h2v2h-2zM1398 1022h2v2h-2zM1403 1022h2v2h-2zM1408 1022h2v2h-2z"/><path d="M1420 1015h9l-4.5 4z M1487 1015h9l-4.5 4z M1527 1015h9l-4.5 4z M1591 1015h9l-4.5 4z M1725 1015h9l-4.5 4z M1767 1015h9l-4.5 4z"/><path d="M1643 1010l-6 15 6-4 6 4z M1664 1010l-6 15 6-4 6 4z M1690.5 1010l-6 15 6-4 6 4z"/><circle cx="1751.5" cy="1017.5" r="6"/><path d="M1749.5 1009h4v17h-4zM1743 1015.5h17v4h-17zM1744.5 1012l3-3 11 11-3 3zM1755.5 1009l3 3-11 11-3-3z"/><circle cx="1751.5" cy="1017.5" r="2.3" fill="#3b4453"/><path d="M1897 1010h18v2h-18zM1897 1016.5h18v2h-18zM1897 1023h18v2h-18z"/></g><circle cx="1649" cy="1013" r="2.5" stroke="#e6e8ec" fill="none"/><path d="M1504 1010l13 14" stroke="#e04040" stroke-width="1.2"/><path d="M1510.5 1009v16" stroke="#30c040" stroke-width="1.2"/><circle cx="1510.5" cy="1017" r="1.6" fill="#3b4453" stroke="#e6e8ec"/><path d="M1842 1010h12l3 3v7h-15z" fill="#3a7bd5"/><path d="M1842 1020h12v6h-12z" fill="#e8a820"/><path d="M1849 1010v16M1842 1016h15" stroke="#fff" stroke-width="1"/><path d="M1851 1023l2.5 2.5 5-5" stroke="#3cc050" stroke-width="1.6" fill="none"/></svg><div class="t" style="left:1281px;top:1011.2px;font-size:11.6px;color:#e6e8ec;letter-spacing:-0.35px">PAPER&nbsp; MODEL</div><div class="t" style="left:1708px;top:1010.4px;font-size:12.5px;color:#e6e8ec">1:1</div><div class="a" style="left:323px;top:182px;width:1283px;height:761px;overflow:hidden;background:#000"><svg width="1283" height="761" viewBox="323 182 1283 761" font-family="Liberation Sans, sans-serif"><path d="M326.55 182V943M331.77 182V943M342.23 182V943M347.45 182V943M352.68 182V943M363.12 182V943M368.35 182V943M373.57 182V943M384.02 182V943M389.25 182V943M394.48 182V943M404.93 182V943M410.15 182V943M415.38 182V943M425.82 182V943M431.05 182V943M436.27 182V943M446.73 182V943M451.95 182V943M457.18 182V943M467.62 182V943M472.85 182V943M478.07 182V943M488.52 182V943M493.75 182V943M498.98 182V943M509.43 182V943M514.65 182V943M519.88 182V943M530.33 182V943M535.55 182V943M540.77 182V943M551.23 182V943M556.45 182V943M561.67 182V943M572.12 182V943M577.35 182V943M582.58 182V943M593.02 182V943M598.25 182V943M603.48 182V943M613.92 182V943M619.15 182V943M624.38 182V943M634.83 182V943M640.05 182V943M645.27 182V943M655.73 182V943M660.95 182V943M666.17 182V943M676.62 182V943M681.85 182V943M687.08 182V943M697.52 182V943M702.75 182V943M707.97 182V943M718.42 182V943M723.65 182V943M728.88 182V943M739.33 182V943M744.55 182V943M749.77 182V943M760.22 182V943M765.45 182V943M770.67 182V943M781.12 182V943M786.35 182V943M791.58 182V943M802.02 182V943M807.25 182V943M812.47 182V943M822.92 182V943M828.15 182V943M833.38 182V943M843.83 182V943M849.05 182V943M854.27 182V943M864.72 182V943M869.95 182V943M875.17 182V943M885.62 182V943M890.85 182V943M896.08 182V943M906.52 182V943M911.75 182V943M916.97 182V943M927.42 182V943M932.65 182V943M937.88 182V943M948.33 182V943M953.55 182V943M958.77 182V943M969.22 182V943M974.45 182V943M979.67 182V943M990.12 182V943M995.35 182V943M1000.57 182V943M1011.02 182V943M1016.25 182V943M1021.47 182V943M1031.92 182V943M1037.15 182V943M1042.38 182V943M1052.82 182V943M1058.05 182V943M1063.28 182V943M1073.72 182V943M1078.95 182V943M1084.17 182V943M1094.62 182V943M1099.85 182V943M1105.07 182V943M1115.53 182V943M1120.75 182V943M1125.97 182V943M1136.42 182V943M1141.65 182V943M1146.88 182V943M1157.32 182V943M1162.55 182V943M1167.78 182V943M1178.22 182V943M1183.45 182V943M1188.67 182V943M1199.12 182V943M1204.35 182V943M1209.57 182V943M1220.03 182V943M1225.25 182V943M1230.47 182V943M1240.92 182V943M1246.15 182V943M1251.38 182V943M1261.82 182V943M1267.05 182V943M1272.28 182V943M1282.72 182V943M1287.95 182V943M1293.17 182V943M1303.62 182V943M1308.85 182V943M1314.07 182V943M1324.53 182V943M1329.75 182V943M1334.97 182V943M1345.42 182V943M1350.65 182V943M1355.88 182V943M1366.32 182V943M1371.55 182V943M1376.78 182V943M1387.22 182V943M1392.45 182V943M1397.67 182V943M1408.12 182V943M1413.35 182V943M1418.57 182V943M1429.03 182V943M1434.25 182V943M1439.47 182V943M1449.92 182V943M1455.15 182V943M1460.38 182V943M1470.82 182V943M1476.05 182V943M1481.27 182V943M1491.72 182V943M1496.95 182V943M1502.17 182V943M1512.62 182V943M1517.85 182V943M1523.07 182V943M1533.52 182V943M1538.75 182V943M1543.97 182V943M1554.42 182V943M1559.65 182V943M1564.88 182V943M1575.32 182V943M1580.55 182V943M1585.77 182V943M1596.22 182V943M1601.45 182V943M323 191.12H1606M323 196.35H1606M323 201.58H1606M323 212.02H1606M323 217.25H1606M323 222.48H1606M323 232.92H1606M323 238.15H1606M323 243.38H1606M323 253.83H1606M323 259.05H1606M323 264.27H1606M323 274.73H1606M323 279.95H1606M323 285.17H1606M323 295.62H1606M323 300.85H1606M323 306.08H1606M323 316.52H1606M323 321.75H1606M323 326.98H1606M323 337.42H1606M323 342.65H1606M323 347.88H1606M323 358.33H1606M323 363.55H1606M323 368.77H1606M323 379.23H1606M323 384.45H1606M323 389.67H1606M323 400.12H1606M323 405.35H1606M323 410.58H1606M323 421.02H1606M323 426.25H1606M323 431.47H1606M323 441.93H1606M323 447.15H1606M323 452.38H1606M323 462.82H1606M323 468.05H1606M323 473.27H1606M323 483.72H1606M323 488.95H1606M323 494.18H1606M323 504.62H1606M323 509.85H1606M323 515.08H1606M323 525.52H1606M323 530.75H1606M323 535.97H1606M323 546.42H1606M323 551.65H1606M323 556.88H1606M323 567.33H1606M323 572.55H1606M323 577.77H1606M323 588.22H1606M323 593.45H1606M323 598.67H1606M323 609.12H1606M323 614.35H1606M323 619.58H1606M323 630.02H1606M323 635.25H1606M323 640.47H1606M323 650.92H1606M323 656.15H1606M323 661.38H1606M323 671.83H1606M323 677.05H1606M323 682.27H1606M323 692.72H1606M323 697.95H1606M323 703.17H1606M323 713.62H1606M323 718.85H1606M323 724.07H1606M323 734.52H1606M323 739.75H1606M323 744.97H1606M323 755.42H1606M323 760.65H1606M323 765.88H1606M323 776.32H1606M323 781.55H1606M323 786.77H1606M323 797.22H1606M323 802.45H1606M323 807.67H1606M323 818.12H1606M323 823.35H1606M323 828.57H1606M323 839.02H1606M323 844.25H1606M323 849.47H1606M323 859.92H1606M323 865.15H1606M323 870.38H1606M323 880.82H1606M323 886.05H1606M323 891.27H1606M323 901.72H1606M323 906.95H1606M323 912.17H1606M323 922.62H1606M323 927.85H1606M323 933.07H1606" stroke="#101218" stroke-width="1"/><path d="M337.0 182V943M357.9 182V943M378.8 182V943M399.7 182V943M420.6 182V943M441.5 182V943M462.4 182V943M483.3 182V943M504.2 182V943M525.1 182V943M546.0 182V943M566.9 182V943M587.8 182V943M608.7 182V943M629.6 182V943M650.5 182V943M671.4 182V943M692.3 182V943M713.2 182V943M734.1 182V943M755.0 182V943M775.9 182V943M796.8 182V943M817.7 182V943M838.6 182V943M859.5 182V943M880.4 182V943M901.3 182V943M922.2 182V943M943.1 182V943M964.0 182V943M984.9 182V943M1005.8 182V943M1026.7 182V943M1047.6 182V943M1068.5 182V943M1089.4 182V943M1110.3 182V943M1131.2 182V943M1152.1 182V943M1173.0 182V943M1193.9 182V943M1214.8 182V943M1235.7 182V943M1256.6 182V943M1277.5 182V943M1298.4 182V943M1319.3 182V943M1340.2 182V943M1361.1 182V943M1382.0 182V943M1402.9 182V943M1423.8 182V943M1444.7 182V943M1465.6 182V943M1486.5 182V943M1507.4 182V943M1528.3 182V943M1549.2 182V943M1570.1 182V943M1591.0 182V943M323 185.9H1606M323 206.8H1606M323 227.7H1606M323 248.6H1606M323 269.5H1606M323 290.4H1606M323 311.3H1606M323 332.2H1606M323 353.1H1606M323 374.0H1606M323 394.9H1606M323 415.8H1606M323 436.7H1606M323 457.6H1606M323 478.5H1606M323 499.4H1606M323 520.3H1606M323 541.2H1606M323 562.1H1606M323 583.0H1606M323 603.9H1606M323 624.8H1606M323 645.7H1606M323 666.6H1606M323 687.5H1606M323 708.4H1606M323 729.3H1606M323 750.2H1606M323 771.1H1606M323 792.0H1606M323 812.9H1606M323 833.8H1606M323 854.7H1606M323 875.6H1606M323 896.5H1606M323 917.4H1606M323 938.3H1606" stroke="#282c38" stroke-width="1"/><path d="M441.5 182.0L441.5 188.5" stroke="#1f9a1f" stroke-width="1"/><path d="M1486.5 938.5L1606.0 938.5" stroke="#8c1c1c" stroke-width="1.2"/><rect x="441.5" y="188.5" width="1045.0" height="749.8" stroke="#dcdcdc" stroke-width="1.5" fill="none"/><rect x="454.5" y="201.5" width="1018.7" height="723.5" stroke="#dcdcdc" stroke-width="1.5" fill="none"/><path d="M572.1 188.5L572.1 201.5" stroke="#dcdcdc" stroke-width="1.5"/><path d="M572.1 925.0L572.1 938.3" stroke="#dcdcdc" stroke-width="1.5"/><path d="M702.7 188.5L702.7 201.5" stroke="#dcdcdc" stroke-width="1.5"/><path d="M702.7 925.0L702.7 938.3" stroke="#dcdcdc" stroke-width="1.5"/><path d="M833.3 188.5L833.3 201.5" stroke="#dcdcdc" stroke-width="1.5"/><path d="M833.3 925.0L833.3 938.3" stroke="#dcdcdc" stroke-width="1.5"/><path d="M963.9 188.5L963.9 201.5" stroke="#dcdcdc" stroke-width="1.5"/><path d="M963.9 925.0L963.9 938.3" stroke="#dcdcdc" stroke-width="1.5"/><path d="M1094.5 188.5L1094.5 201.5" stroke="#dcdcdc" stroke-width="1.5"/><path d="M1094.5 925.0L1094.5 938.3" stroke="#dcdcdc" stroke-width="1.5"/><path d="M1225.1 188.5L1225.1 201.5" stroke="#dcdcdc" stroke-width="1.5"/><path d="M1225.1 925.0L1225.1 938.3" stroke="#dcdcdc" stroke-width="1.5"/><path d="M1355.7 188.5L1355.7 201.5" stroke="#dcdcdc" stroke-width="1.5"/><path d="M1355.7 925.0L1355.7 938.3" stroke="#dcdcdc" stroke-width="1.5"/><text x="510.3" y="200.0" fill="#dcdcdc" font-size="12.5" text-anchor="middle">1</text><text x="510.3" y="936.0" fill="#dcdcdc" font-size="12.5" text-anchor="middle">1</text><text x="640.9" y="200.0" fill="#dcdcdc" font-size="12.5" text-anchor="middle">2</text><text x="640.9" y="936.0" fill="#dcdcdc" font-size="12.5" text-anchor="middle">2</text><text x="771.5" y="200.0" fill="#dcdcdc" font-size="12.5" text-anchor="middle">3</text><text x="771.5" y="936.0" fill="#dcdcdc" font-size="12.5" text-anchor="middle">3</text><text x="902.1" y="200.0" fill="#dcdcdc" font-size="12.5" text-anchor="middle">4</text><text x="902.1" y="936.0" fill="#dcdcdc" font-size="12.5" text-anchor="middle">4</text><text x="1032.7" y="200.0" fill="#dcdcdc" font-size="12.5" text-anchor="middle">5</text><text x="1032.7" y="936.0" fill="#dcdcdc" font-size="12.5" text-anchor="middle">5</text><text x="1163.3" y="200.0" fill="#dcdcdc" font-size="12.5" text-anchor="middle">6</text><text x="1163.3" y="936.0" fill="#dcdcdc" font-size="12.5" text-anchor="middle">6</text><text x="1293.9" y="200.0" fill="#dcdcdc" font-size="12.5" text-anchor="middle">7</text><text x="1293.9" y="936.0" fill="#dcdcdc" font-size="12.5" text-anchor="middle">7</text><text x="1424.5" y="200.0" fill="#dcdcdc" font-size="12.5" text-anchor="middle">8</text><text x="1429.0" y="936.0" fill="#dcdcdc" font-size="12.5" text-anchor="middle">A3</text><path d="M441.5 319.3L454.5 319.3" stroke="#dcdcdc" stroke-width="1.5"/><path d="M1473.2 319.3L1486.5 319.3" stroke="#dcdcdc" stroke-width="1.5"/><path d="M441.5 450.0L454.5 450.0" stroke="#dcdcdc" stroke-width="1.5"/><path d="M1473.2 450.0L1486.5 450.0" stroke="#dcdcdc" stroke-width="1.5"/><path d="M441.5 580.7L454.5 580.7" stroke="#dcdcdc" stroke-width="1.5"/><path d="M1473.2 580.7L1486.5 580.7" stroke="#dcdcdc" stroke-width="1.5"/><path d="M441.5 711.3L454.5 711.3" stroke="#dcdcdc" stroke-width="1.5"/><path d="M1473.2 711.3L1486.5 711.3" stroke="#dcdcdc" stroke-width="1.5"/><path d="M441.5 842.0L454.5 842.0" stroke="#dcdcdc" stroke-width="1.5"/><path d="M1473.2 842.0L1486.5 842.0" stroke="#dcdcdc" stroke-width="1.5"/><path d="M454.5 580.7L467.0 580.7" stroke="#dcdcdc" stroke-width="1.5"/><path d="M1459.0 580.7L1473.2 580.7" stroke="#dcdcdc" stroke-width="1.5"/><text x="448.0" y="253.5" fill="#dcdcdc" font-size="12.5" text-anchor="middle">A</text><text x="1480.0" y="253.5" fill="#dcdcdc" font-size="12.5" text-anchor="middle">A</text><text x="448.0" y="384.0" fill="#dcdcdc" font-size="12.5" text-anchor="middle">B</text><text x="1480.0" y="384.0" fill="#dcdcdc" font-size="12.5" text-anchor="middle">B</text><text x="448.0" y="515.0" fill="#dcdcdc" font-size="12.5" text-anchor="middle">C</text><text x="1480.0" y="515.0" fill="#dcdcdc" font-size="12.5" text-anchor="middle">C</text><text x="448.0" y="645.5" fill="#dcdcdc" font-size="12.5" text-anchor="middle">D</text><text x="1480.0" y="645.5" fill="#dcdcdc" font-size="12.5" text-anchor="middle">D</text><text x="448.0" y="776.0" fill="#dcdcdc" font-size="12.5" text-anchor="middle">E</text><text x="1480.0" y="776.0" fill="#dcdcdc" font-size="12.5" text-anchor="middle">E</text><text x="448.0" y="906.5" fill="#dcdcdc" font-size="12.5" text-anchor="middle">F</text><text x="1480.0" y="906.5" fill="#dcdcdc" font-size="12.5" text-anchor="middle">F</text><rect x="985.2" y="212.5" width="471.0" height="272.1" stroke="#cccccc" stroke-width="1.5" fill="none"/><path d="M1050.5 212.5L1050.5 484.6" stroke="#cccccc" stroke-width="1.5"/><path d="M1103.5 212.5L1103.5 484.6" stroke="#cccccc" stroke-width="1.5"/><path d="M1207.5 212.5L1207.5 484.6" stroke="#cccccc" stroke-width="1.5"/><path d="M1338.7 212.5L1338.7 484.6" stroke="#cccccc" stroke-width="1.5"/><path d="M985.2 226.0L1456.2 226.0" stroke="#cccccc" stroke-width="1.5"/><path d="M985.2 240.0L1456.2 240.0" stroke="#cccccc" stroke-width="1.5"/><path d="M985.2 254.0L1456.2 254.0" stroke="#cccccc" stroke-width="1.5"/><path d="M985.2 268.3L1456.2 268.3" stroke="#cccccc" stroke-width="1.5"/><path d="M985.2 282.3L1456.2 282.3" stroke="#cccccc" stroke-width="1.5"/><path d="M985.2 296.2L1456.2 296.2" stroke="#cccccc" stroke-width="1.5"/><path d="M985.2 318.3L1456.2 318.3" stroke="#cccccc" stroke-width="1.5"/><path d="M985.2 332.3L1456.2 332.3" stroke="#cccccc" stroke-width="1.5"/><path d="M985.2 355.3L1456.2 355.3" stroke="#cccccc" stroke-width="1.5"/><path d="M985.2 369.5L1456.2 369.5" stroke="#cccccc" stroke-width="1.5"/><path d="M985.2 383.5L1456.2 383.5" stroke="#cccccc" stroke-width="1.5"/><path d="M985.2 406.3L1456.2 406.3" stroke="#cccccc" stroke-width="1.5"/><path d="M985.2 420.4L1456.2 420.4" stroke="#cccccc" stroke-width="1.5"/><path d="M985.2 434.7L1456.2 434.7" stroke="#cccccc" stroke-width="1.5"/><path d="M985.2 456.8L1456.2 456.8" stroke="#cccccc" stroke-width="1.5"/><path d="M985.2 471.0L1456.2 471.0" stroke="#cccccc" stroke-width="1.5"/><text x="1017.9" y="223.0" fill="#cccccc" font-size="10.2" text-anchor="middle" letter-spacing="-0.45">ITEM ID</text><text x="1077.0" y="223.0" fill="#cccccc" font-size="10.2" text-anchor="middle" letter-spacing="-0.45">QTY</text><text x="1155.5" y="223.0" fill="#cccccc" font-size="10.2" text-anchor="middle" letter-spacing="-0.45">MODEL CODE</text><text x="1273.1" y="223.0" fill="#cccccc" font-size="10.2" text-anchor="middle" letter-spacing="-0.45">DESCRIPTION</text><text x="1397.5" y="223.0" fill="#cccccc" font-size="10.2" text-anchor="middle" letter-spacing="-0.45">MANUFACTURER</text><text x="1017.9" y="236.7" fill="#cccccc" font-size="10.2" text-anchor="middle" letter-spacing="-0.45">1</text><text x="1077.0" y="236.7" fill="#cccccc" font-size="10.2" text-anchor="middle" letter-spacing="-0.45">1</text><text x="1105.5" y="236.7" fill="#cccccc" font-size="10.2" text-anchor="start" letter-spacing="-0.45">MAN78130</text><text x="1209.5" y="236.7" fill="#cccccc" font-size="10.2" text-anchor="start" letter-spacing="-0.45">MANIFOLD</text><text x="1340.7" y="236.7" fill="#cccccc" font-size="10.2" text-anchor="start" letter-spacing="-0.45"></text><text x="1017.9" y="250.7" fill="#cccccc" font-size="10.2" text-anchor="middle" letter-spacing="-0.45">2</text><text x="1077.0" y="250.7" fill="#cccccc" font-size="10.2" text-anchor="middle" letter-spacing="-0.45">1</text><text x="1105.5" y="250.7" fill="#cccccc" font-size="10.2" text-anchor="start" letter-spacing="-0.45">GRS3DN4044M499</text><text x="1209.5" y="250.7" fill="#cccccc" font-size="10.2" text-anchor="start" letter-spacing="-0.45">BALL VALVE</text><text x="1340.7" y="250.7" fill="#cccccc" font-size="10.2" text-anchor="start" letter-spacing="-0.45">GEMELS</text><text x="1017.9" y="264.8" fill="#cccccc" font-size="10.2" text-anchor="middle" letter-spacing="-0.45">3</text><text x="1077.0" y="264.8" fill="#cccccc" font-size="10.2" text-anchor="middle" letter-spacing="-0.45">1</text><text x="1105.5" y="264.8" fill="#cccccc" font-size="10.2" text-anchor="start" letter-spacing="-0.45">BFP30XPWAN</text><text x="1209.5" y="264.8" fill="#cccccc" font-size="10.2" text-anchor="start" letter-spacing="-0.45">FILLER BREATHER</text><text x="1340.7" y="264.8" fill="#cccccc" font-size="10.2" text-anchor="start" letter-spacing="-0.45">HYDAC</text><text x="1017.9" y="279.0" fill="#cccccc" font-size="10.2" text-anchor="middle" letter-spacing="-0.45">4</text><text x="1077.0" y="279.0" fill="#cccccc" font-size="10.2" text-anchor="middle" letter-spacing="-0.45">1</text><text x="1105.5" y="279.0" fill="#cccccc" font-size="10.2" text-anchor="start" letter-spacing="-0.45">D2K19013</text><text x="1209.5" y="279.0" fill="#cccccc" font-size="10.2" text-anchor="start" letter-spacing="-0.45">PILOT OP. CHECK VALVE</text><text x="1340.7" y="279.0" fill="#cccccc" font-size="10.2" text-anchor="start" letter-spacing="-0.45">PARKER</text><text x="1017.9" y="292.9" fill="#cccccc" font-size="10.2" text-anchor="middle" letter-spacing="-0.45">5</text><text x="1077.0" y="292.9" fill="#cccccc" font-size="10.2" text-anchor="middle" letter-spacing="-0.45">1</text><text x="1105.5" y="292.9" fill="#cccccc" font-size="10.2" text-anchor="start" letter-spacing="-0.45">SLG9012</text><text x="1209.5" y="292.9" fill="#cccccc" font-size="10.2" text-anchor="start" letter-spacing="-0.45">SIGHT LEVEL GAGE</text><text x="1340.7" y="292.9" fill="#cccccc" font-size="10.2" text-anchor="start" letter-spacing="-0.45">PARKER</text><text x="1017.9" y="310.9" fill="#cccccc" font-size="10.2" text-anchor="middle" letter-spacing="-0.45">6</text><text x="1077.0" y="310.9" fill="#cccccc" font-size="10.2" text-anchor="middle" letter-spacing="-0.45">1</text><text x="1105.5" y="305.4" fill="#cccccc" font-size="10.2" text-anchor="start" letter-spacing="-0.45">SUS-102-G32-200-125-</text><text x="1105.5" y="316.2" fill="#cccccc" font-size="10.2" text-anchor="start" letter-spacing="-0.45">P-O</text><text x="1209.5" y="310.9" fill="#cccccc" font-size="10.2" text-anchor="start" letter-spacing="-0.45">SUCTION STRAINER</text><text x="1340.7" y="310.9" fill="#cccccc" font-size="10.2" text-anchor="start" letter-spacing="-0.45">STAUFF</text><text x="1017.9" y="329.0" fill="#cccccc" font-size="10.2" text-anchor="middle" letter-spacing="-0.45">7</text><text x="1077.0" y="329.0" fill="#cccccc" font-size="10.2" text-anchor="middle" letter-spacing="-0.45">1</text><text x="1105.5" y="329.0" fill="#cccccc" font-size="10.2" text-anchor="start" letter-spacing="-0.45">CVH103PPK</text><text x="1209.5" y="329.0" fill="#cccccc" font-size="10.2" text-anchor="start" letter-spacing="-0.45">CHECK VALVE</text><text x="1340.7" y="329.0" fill="#cccccc" font-size="10.2" text-anchor="start" letter-spacing="-0.45">PARKER</text><text x="1017.9" y="347.5" fill="#cccccc" font-size="10.2" text-anchor="middle" letter-spacing="-0.45">8</text><text x="1077.0" y="347.5" fill="#cccccc" font-size="10.2" text-anchor="middle" letter-spacing="-0.45">2</text><text x="1105.5" y="347.5" fill="#cccccc" font-size="10.2" text-anchor="start" letter-spacing="-0.45">D1VW004CLWN</text><text x="1209.5" y="342.0" fill="#cccccc" font-size="10.2" text-anchor="start" letter-spacing="-0.45">DIRECTION CONTROL</text><text x="1209.5" y="352.8" fill="#cccccc" font-size="10.2" text-anchor="start" letter-spacing="-0.45">VALVE</text><text x="1340.7" y="347.5" fill="#cccccc" font-size="10.2" text-anchor="start" letter-spacing="-0.45">PARKER</text><text x="1017.9" y="366.1" fill="#cccccc" font-size="10.2" text-anchor="middle" letter-spacing="-0.45">9</text><text x="1077.0" y="366.1" fill="#cccccc" font-size="10.2" text-anchor="middle" letter-spacing="-0.45">1</text><text x="1105.5" y="366.1" fill="#cccccc" font-size="10.2" text-anchor="start" letter-spacing="-0.45">VMQ125TRR00*000-13</text><text x="1209.5" y="366.1" fill="#cccccc" font-size="10.2" text-anchor="start" letter-spacing="-0.45">PUMP</text><text x="1340.7" y="366.1" fill="#cccccc" font-size="10.2" text-anchor="start" letter-spacing="-0.45">EATON</text><text x="1017.9" y="380.2" fill="#cccccc" font-size="10.2" text-anchor="middle" letter-spacing="-0.45">10</text><text x="1077.0" y="380.2" fill="#cccccc" font-size="10.2" text-anchor="middle" letter-spacing="-0.45">1</text><text x="1105.5" y="380.2" fill="#cccccc" font-size="10.2" text-anchor="start" letter-spacing="-0.45">MP214</text><text x="1209.5" y="380.2" fill="#cccccc" font-size="10.2" text-anchor="start" letter-spacing="-0.45">MOTOR/PUMP ADAPTER</text><text x="1340.7" y="380.2" fill="#cccccc" font-size="10.2" text-anchor="start" letter-spacing="-0.45">ADAPTER INC</text><text x="1017.9" y="398.6" fill="#cccccc" font-size="10.2" text-anchor="middle" letter-spacing="-0.45">11</text><text x="1077.0" y="398.6" fill="#cccccc" font-size="10.2" text-anchor="middle" letter-spacing="-0.45">1</text><text x="1105.5" y="398.6" fill="#cccccc" font-size="10.2" text-anchor="start" letter-spacing="-0.45">EM2543T</text><text x="1209.5" y="398.6" fill="#cccccc" font-size="10.2" text-anchor="start" letter-spacing="-0.45">ELECTRIC MOTOR</text><text x="1340.7" y="393.1" fill="#cccccc" font-size="10.2" text-anchor="start" letter-spacing="-0.45">BALDOR, ELECTRIC</text><text x="1340.7" y="403.9" fill="#cccccc" font-size="10.2" text-anchor="start" letter-spacing="-0.45">MOTORS</text><text x="1017.9" y="417.1" fill="#cccccc" font-size="10.2" text-anchor="middle" letter-spacing="-0.45">12</text><text x="1077.0" y="417.1" fill="#cccccc" font-size="10.2" text-anchor="middle" letter-spacing="-0.45">1</text><text x="1105.5" y="417.1" fill="#cccccc" font-size="10.2" text-anchor="start" letter-spacing="-0.45">CS8923</text><text x="1209.5" y="417.1" fill="#cccccc" font-size="10.2" text-anchor="start" letter-spacing="-0.45">COUPLING SET</text><text x="1340.7" y="417.1" fill="#cccccc" font-size="10.2" text-anchor="start" letter-spacing="-0.45">COUPLINGS INC</text><text x="1017.9" y="431.2" fill="#cccccc" font-size="10.2" text-anchor="middle" letter-spacing="-0.45">13</text><text x="1077.0" y="431.2" fill="#cccccc" font-size="10.2" text-anchor="middle" letter-spacing="-0.45">1</text><text x="1105.5" y="431.2" fill="#cccccc" font-size="10.2" text-anchor="start" letter-spacing="-0.45">CBCHLHN</text><text x="1209.5" y="431.2" fill="#cccccc" font-size="10.2" text-anchor="start" letter-spacing="-0.45">COUNTERBALANCE VALVE</text><text x="1340.7" y="431.2" fill="#cccccc" font-size="10.2" text-anchor="start" letter-spacing="-0.45">SUN HYDRAULICS</text><text x="1017.9" y="449.4" fill="#cccccc" font-size="10.2" text-anchor="middle" letter-spacing="-0.45">14</text><text x="1077.0" y="449.4" fill="#cccccc" font-size="10.2" text-anchor="middle" letter-spacing="-0.45">1</text><text x="1105.5" y="449.4" fill="#cccccc" font-size="10.2" text-anchor="start" letter-spacing="-0.45">04.15.23-03-85-XX</text><text x="1209.5" y="443.9" fill="#cccccc" font-size="10.2" text-anchor="start" letter-spacing="-0.45">DIRECT ACTING PRESSURE</text><text x="1209.5" y="454.8" fill="#cccccc" font-size="10.2" text-anchor="start" letter-spacing="-0.45">RELIEF VALVE</text><text x="1340.7" y="449.4" fill="#cccccc" font-size="10.2" text-anchor="start" letter-spacing="-0.45">BOSCH REXROTH</text><text x="1017.9" y="467.6" fill="#cccccc" font-size="10.2" text-anchor="middle" letter-spacing="-0.45">15</text><text x="1077.0" y="467.6" fill="#cccccc" font-size="10.2" text-anchor="middle" letter-spacing="-0.45">1</text><text x="1105.5" y="467.6" fill="#cccccc" font-size="10.2" text-anchor="start" letter-spacing="-0.45">RS6613</text><text x="1209.5" y="467.6" fill="#cccccc" font-size="10.2" text-anchor="start" letter-spacing="-0.45">RESERVOIR</text><text x="1340.7" y="467.6" fill="#cccccc" font-size="10.2" text-anchor="start" letter-spacing="-0.45">TANK INC</text><text x="1017.9" y="481.5" fill="#cccccc" font-size="10.2" text-anchor="middle" letter-spacing="-0.45">17</text><text x="1077.0" y="481.5" fill="#cccccc" font-size="10.2" text-anchor="middle" letter-spacing="-0.45">2</text><text x="1105.5" y="481.5" fill="#cccccc" font-size="10.2" text-anchor="start" letter-spacing="-0.45">CKEB-XCN</text><text x="1209.5" y="481.5" fill="#cccccc" font-size="10.2" text-anchor="start" letter-spacing="-0.45">CHECK PILOT TO OPEN</text><text x="1340.7" y="481.5" fill="#cccccc" font-size="10.2" text-anchor="start" letter-spacing="-0.45">SUN</text><rect x="1103.7" y="504.3" width="351.9" height="65.3" stroke="#cccccc" stroke-width="1.5" fill="none"/><path d="M1168.3 504.3L1168.3 569.6" stroke="#cccccc" stroke-width="1.5"/><path d="M1246.8 504.3L1246.8 569.6" stroke="#cccccc" stroke-width="1.5"/><path d="M1377.5 504.3L1377.5 569.6" stroke="#cccccc" stroke-width="1.5"/><path d="M1103.7 517.8L1455.6 517.8" stroke="#cccccc" stroke-width="1.5"/><path d="M1103.7 542.2L1455.6 542.2" stroke="#cccccc" stroke-width="1.5"/><path d="M1103.7 556.3L1455.6 556.3" stroke="#cccccc" stroke-width="1.5"/><text x="1136.0" y="514.7" fill="#cccccc" font-size="10.2" text-anchor="middle" letter-spacing="-0.45">ITEM ID</text><text x="1207.5" y="514.7" fill="#cccccc" font-size="10.2" text-anchor="middle" letter-spacing="-0.45">PORT TYPE</text><text x="1312.2" y="514.7" fill="#cccccc" font-size="10.2" text-anchor="middle" letter-spacing="-0.45">DESCRIPTION</text><text x="1416.5" y="514.7" fill="#cccccc" font-size="10.2" text-anchor="middle" letter-spacing="-0.45">PORT SIZE</text><text x="1105.5" y="528.0" fill="#cccccc" font-size="10.2" text-anchor="start" letter-spacing="-0.45">A1, A2, B1,</text><text x="1105.5" y="538.5" fill="#cccccc" font-size="10.2" text-anchor="start" letter-spacing="-0.45">B2, DR</text><text x="1170.3" y="533.7" fill="#cccccc" font-size="10.2" text-anchor="start" letter-spacing="-0.45">SAE O-RING</text><text x="1248.8" y="533.7" fill="#cccccc" font-size="10.2" text-anchor="start" letter-spacing="-0.45">#6 SAE</text><text x="1379.5" y="533.7" fill="#cccccc" font-size="10.2" text-anchor="start" letter-spacing="-0.45">#6 SAE</text><text x="1105.7" y="553.0" fill="#cccccc" font-size="10.2" text-anchor="start" letter-spacing="-0.45">P</text><text x="1170.3" y="553.0" fill="#cccccc" font-size="10.2" text-anchor="start" letter-spacing="-0.45">SAE FLANGE</text><text x="1248.8" y="553.0" fill="#cccccc" font-size="10.2" text-anchor="start" letter-spacing="-0.45">3/4&quot; CODE 62 SAE FLANGE</text><text x="1379.5" y="553.0" fill="#cccccc" font-size="10.2" text-anchor="start" letter-spacing="-0.45">3/4&quot; CODE 62</text><text x="1105.7" y="566.7" fill="#cccccc" font-size="10.2" text-anchor="start" letter-spacing="-0.45">T</text><text x="1170.3" y="566.7" fill="#cccccc" font-size="10.2" text-anchor="start" letter-spacing="-0.45">SAE FLANGE</text><text x="1248.8" y="566.7" fill="#cccccc" font-size="10.2" text-anchor="start" letter-spacing="-0.45">3/4&quot; CODE 61 SAE FLANGE</text><text x="1379.5" y="566.7" fill="#cccccc" font-size="10.2" text-anchor="start" letter-spacing="-0.45">3/4&quot; CODE 61</text><rect x="1116.6" y="592.4" width="339.0" height="41.4" stroke="#cccccc" stroke-width="1.5" fill="none"/><path d="M1194.3 592.4L1194.3 633.8" stroke="#cccccc" stroke-width="1.5"/><path d="M1259.9 592.4L1259.9 633.8" stroke="#cccccc" stroke-width="1.5"/><path d="M1325.4 592.4L1325.4 633.8" stroke="#cccccc" stroke-width="1.5"/><path d="M1390.4 592.4L1390.4 633.8" stroke="#cccccc" stroke-width="1.5"/><path d="M1116.6 606.5L1455.6 606.5" stroke="#cccccc" stroke-width="1.5"/><path d="M1116.6 620.3L1455.6 620.3" stroke="#cccccc" stroke-width="1.5"/><text x="1118.6" y="603.3" fill="#cccccc" font-size="10.2" text-anchor="start" letter-spacing="-0.45">FUNCTION</text><text x="1196.3" y="603.3" fill="#cccccc" font-size="10.2" text-anchor="start" letter-spacing="-0.45">8.1-S1</text><text x="1261.9" y="603.3" fill="#cccccc" font-size="10.2" text-anchor="start" letter-spacing="-0.45">8.1-S2</text><text x="1327.4" y="603.3" fill="#cccccc" font-size="10.2" text-anchor="start" letter-spacing="-0.45">8.2-S1</text><text x="1392.4" y="603.3" fill="#cccccc" font-size="10.2" text-anchor="start" letter-spacing="-0.45">8.2-S2</text><text x="1118.6" y="617.0" fill="#cccccc" font-size="10.2" text-anchor="start" letter-spacing="-0.45">CLOSE</text><text x="1118.6" y="630.7" fill="#cccccc" font-size="10.2" text-anchor="start" letter-spacing="-0.45">OPEN</text><circle cx="1227.0" cy="613.4" r="4.0" stroke="#cccccc" stroke-width="1.2" fill="none"/><circle cx="1227.0" cy="627.0" r="4.0" stroke="#cccccc" stroke-width="1.2" fill="#cccccc"/><circle cx="1292.4" cy="613.4" r="4.0" stroke="#cccccc" stroke-width="1.2" fill="#cccccc"/><circle cx="1292.4" cy="627.0" r="4.0" stroke="#cccccc" stroke-width="1.2" fill="none"/><circle cx="1357.8" cy="613.4" r="4.0" stroke="#cccccc" stroke-width="1.2" fill="none"/><circle cx="1357.8" cy="627.0" r="4.0" stroke="#cccccc" stroke-width="1.2" fill="#cccccc"/><circle cx="1423.2" cy="613.4" r="4.0" stroke="#cccccc" stroke-width="1.2" fill="#cccccc"/><circle cx="1423.2" cy="627.0" r="4.0" stroke="#cccccc" stroke-width="1.2" fill="none"/><rect x="1259.6" y="661.0" width="196.3" height="166.8" stroke="#cccccc" stroke-width="1.5" fill="none"/><path d="M1325.5 661.0L1325.5 827.8" stroke="#cccccc" stroke-width="1.5"/><path d="M1259.6 674.9L1455.9 674.9" stroke="#cccccc" stroke-width="1.5"/><path d="M1259.6 688.8L1455.9 688.8" stroke="#cccccc" stroke-width="1.5"/><path d="M1259.6 702.7L1455.9 702.7" stroke="#cccccc" stroke-width="1.5"/><path d="M1259.6 716.6L1455.9 716.6" stroke="#cccccc" stroke-width="1.5"/><path d="M1259.6 730.5L1455.9 730.5" stroke="#cccccc" stroke-width="1.5"/><path d="M1259.6 744.4L1455.9 744.4" stroke="#cccccc" stroke-width="1.5"/><path d="M1259.6 758.3L1455.9 758.3" stroke="#cccccc" stroke-width="1.5"/><path d="M1259.6 772.2L1455.9 772.2" stroke="#cccccc" stroke-width="1.5"/><path d="M1259.6 786.1L1455.9 786.1" stroke="#cccccc" stroke-width="1.5"/><path d="M1259.6 800.0L1455.9 800.0" stroke="#cccccc" stroke-width="1.5"/><path d="M1259.6 813.9L1455.9 813.9" stroke="#cccccc" stroke-width="1.5"/><text x="1292.5" y="671.6" fill="#cccccc" font-size="10.2" text-anchor="middle" letter-spacing="-0.45">NET NAME</text><text x="1390.7" y="671.6" fill="#cccccc" font-size="10.2" text-anchor="middle" letter-spacing="-0.45">NET LIST</text><text x="1261.5" y="685.5" fill="#cccccc" font-size="10.2" text-anchor="start" letter-spacing="-0.45">NET-1</text><text x="1327.5" y="685.5" fill="#cccccc" font-size="10.2" text-anchor="start" letter-spacing="-0.45">17.2-3, 17.1-2, 8.2-A</text><text x="1261.5" y="699.5" fill="#cccccc" font-size="10.2" text-anchor="start" letter-spacing="-0.45">NET-2</text><text x="1327.5" y="699.5" fill="#cccccc" font-size="10.2" text-anchor="start" letter-spacing="-0.45">17.1-3, 17.2-2, 8.2-B</text><text x="1261.5" y="713.4" fill="#cccccc" font-size="10.2" text-anchor="start" letter-spacing="-0.45">NET-3</text><text x="1327.5" y="713.4" fill="#cccccc" font-size="10.2" text-anchor="start" letter-spacing="-0.45">14-1, 8.2-T, T, 8.1-T, DR</text><text x="1261.5" y="727.2" fill="#cccccc" font-size="10.2" text-anchor="start" letter-spacing="-0.45">NET-4</text><text x="1327.5" y="727.2" fill="#cccccc" font-size="10.2" text-anchor="start" letter-spacing="-0.45">14-2, 8.2-P, 7-2, 8.1-P</text><text x="1261.5" y="741.2" fill="#cccccc" font-size="10.2" text-anchor="start" letter-spacing="-0.45">NET-5</text><text x="1327.5" y="741.2" fill="#cccccc" font-size="10.2" text-anchor="start" letter-spacing="-0.45">P, 7-1</text><text x="1261.5" y="755.0" fill="#cccccc" font-size="10.2" text-anchor="start" letter-spacing="-0.45">NET-6</text><text x="1327.5" y="755.0" fill="#cccccc" font-size="10.2" text-anchor="start" letter-spacing="-0.45">A2, 17.1-1</text><text x="1261.5" y="769.0" fill="#cccccc" font-size="10.2" text-anchor="start" letter-spacing="-0.45">NET-7</text><text x="1327.5" y="769.0" fill="#cccccc" font-size="10.2" text-anchor="start" letter-spacing="-0.45">B2, 17.2-1</text><text x="1261.5" y="782.9" fill="#cccccc" font-size="10.2" text-anchor="start" letter-spacing="-0.45">NET-8</text><text x="1327.5" y="782.9" fill="#cccccc" font-size="10.2" text-anchor="start" letter-spacing="-0.45">13-1, B1</text><text x="1261.5" y="796.8" fill="#cccccc" font-size="10.2" text-anchor="start" letter-spacing="-0.45">NET-9</text><text x="1327.5" y="796.8" fill="#cccccc" font-size="10.2" text-anchor="start" letter-spacing="-0.45">4-1, A1</text><text x="1261.5" y="810.7" fill="#cccccc" font-size="10.2" text-anchor="start" letter-spacing="-0.45">NET-10</text><text x="1327.5" y="810.7" fill="#cccccc" font-size="10.2" text-anchor="start" letter-spacing="-0.45">4-3, 13-2, 8.1-B</text><text x="1261.5" y="824.5" fill="#cccccc" font-size="10.2" text-anchor="start" letter-spacing="-0.45">NET-11</text><text x="1327.5" y="824.5" fill="#cccccc" font-size="10.2" text-anchor="start" letter-spacing="-0.45">13-3, 4-2, 8.1-A</text><rect x="1003.7" y="854.6" width="469.5" height="70.4" stroke="#dcdcdc" stroke-width="1.5" fill="none"/><path d="M1003.7 878.3L1473.2 878.3" stroke="#dcdcdc" stroke-width="1.5"/><path d="M1086.3 854.6L1086.3 925.0" stroke="#dcdcdc" stroke-width="1.5"/><path d="M1196.5 854.6L1196.5 925.0" stroke="#dcdcdc" stroke-width="1.5"/><path d="M1355.7 854.6L1355.7 878.3" stroke="#dcdcdc" stroke-width="1.5"/><path d="M1086.3 901.6L1196.5 901.6" stroke="#dcdcdc" stroke-width="1.5"/><path d="M1340.5 878.3L1340.5 925.0" stroke="#dcdcdc" stroke-width="1.5"/><path d="M1340.5 901.6L1473.2 901.6" stroke="#dcdcdc" stroke-width="1.5"/><path d="M1363.3 901.6L1363.3 925.0" stroke="#dcdcdc" stroke-width="1.5"/><path d="M1426.4 901.6L1426.4 925.0" stroke="#dcdcdc" stroke-width="1.5"/><path d="M1449.6 901.6L1449.6 925.0" stroke="#dcdcdc" stroke-width="1.5"/><text transform="translate(1005 860.5) scale(0.86 1)" fill="#dcdcdc" font-size="6">Responsible dept.</text><text transform="translate(1088.5 860.5) scale(0.86 1)" fill="#dcdcdc" font-size="6">Technical reference</text><text transform="translate(1198.5 860.5) scale(0.86 1)" fill="#dcdcdc" font-size="6">Document type</text><text transform="translate(1357.5 860.5) scale(0.86 1)" fill="#dcdcdc" font-size="6">Document status</text><text transform="translate(1088.5 884) scale(0.86 1)" fill="#dcdcdc" font-size="6">Created by</text><text transform="translate(1198.5 884) scale(0.86 1)" fill="#dcdcdc" font-size="6">Title</text><text transform="translate(1088.5 907.5) scale(0.86 1)" fill="#dcdcdc" font-size="6">Approved by</text><text transform="translate(1342.5 907.5) scale(0.86 1)" fill="#dcdcdc" font-size="6">Rev.</text><text transform="translate(1365 907.5) scale(0.86 1)" fill="#dcdcdc" font-size="6">Date of issue</text><text transform="translate(1428.5 907.5) scale(0.86 1)" fill="#dcdcdc" font-size="6">Lang.</text><text transform="translate(1451.5 907.5) scale(0.86 1)" fill="#dcdcdc" font-size="6">Sheet</text><text transform="translate(1005 873) scale(0.86 1)" fill="#dcdcdc" font-size="10">Hydraulics</text><text transform="translate(1198.5 873) scale(0.86 1)" fill="#dcdcdc" font-size="10">Preliminary</text><text transform="translate(1357.5 873) scale(0.86 1)" fill="#dcdcdc" font-size="10">Under Review</text><text transform="translate(1198.5 893) scale(0.86 1)" fill="#dcdcdc" font-size="10">Sample Schematic</text><text transform="translate(1088.5 896.5) scale(0.86 1)" fill="#dcdcdc" font-size="10">UK</text><text transform="translate(1088.5 920) scale(0.86 1)" fill="#dcdcdc" font-size="10">LM</text><text transform="translate(1342.5 920) scale(0.86 1)" fill="#dcdcdc" font-size="10">1</text><text transform="translate(1365 920) scale(0.86 1)" fill="#dcdcdc" font-size="10">11/03/25</text><text transform="translate(1428.5 920) scale(0.86 1)" fill="#dcdcdc" font-size="10">en</text><text transform="translate(1451.5 920) scale(0.86 1)" fill="#dcdcdc" font-size="10">1/1</text><text transform="translate(1372 893.5) scale(0.86 1)" fill="#dcdcdc" font-size="10">VEST67123</text><text x="1013.0" y="905.0" fill="#dcdcdc" font-size="10.5" text-anchor="start" letter-spacing="-0.3">VEST Inc.</text><text x="1089.0" y="876.0" fill="#dcdcdc" font-size="10" text-anchor="start">-----</text><path d="M963.9 911.0L963.9 925.0" stroke="#b8b8b8" stroke-width="1.5"/><path d="M963.9 201.5L963.9 215.0" stroke="#b8b8b8" stroke-width="1.5"/><path d="M342.4 873.1V923.3H392.8" stroke="#e8e8e8" stroke-width="1.3" fill="none"/><rect x="338.3" y="918.4" width="9.5" height="9.3" stroke="#e8e8e8" stroke-width="1.3" fill="none"/><path d="M344.1 856.1L350.5 862.4L357 856.1M350.5 862.4V868.7" stroke="#e8e8e8" stroke-width="1.3" fill="none"/><path d="M397.2 909.1L410 922M410 909.1L397.2 922" stroke="#e8e8e8" stroke-width="1.3" fill="none"/><path d="M1545 200.5h9" stroke="#e8e8e8" stroke-width="2" fill="none"/><path d="M1565 197h7v7h-7zM1567 197v-2h7v7h-2" stroke="#e8e8e8" stroke-width="1.5" fill="none"/><path d="M1585 193l8 8M1593 193l-8 8" stroke="#e8e8e8" stroke-width="2" fill="none"/><rect x="1570" y="209.5" width="31" height="277.5" rx="4" fill="#636363" fill-opacity="0.82"/><path d="M1575 230l10-5 10 5v12l-10 5-10-5z M1575 230l10 5 10-5M1585 235v12" stroke="#363636" stroke-width="1.2" fill="none"/><path d="M1585 256c7 0 10 4 10 9c0 7-5 12-10 12c-6 0-10-5-10-12c0-5 4-9 10-9zM1585 262a4.5 4 0 1 1 -.1 0M1578 268h14" stroke="#363636" stroke-width="1.2" fill="none"/><path d="M1583 286h4l-2 2z" stroke="#363636" stroke-width="1" fill="none"/><path d="M1577 312c-1-4 0-6 2-4l2 2v-10c0-2 3-2 3 0v6v-9c0-2 3-2 3 0v9v-8c0-2 3-2 3 0v8v-6c0-2 3-2 3 0v10c0 6-4 10-9 10c-4 0-6-3-7-8z" stroke="#363636" stroke-width="1.2" fill="none"/><path d="M1576 327l8 8M1576 327h5M1576 327v5M1594 327l-6 6M1594 327h-5M1594 327v5M1576 349l6-6M1587 338a5 5 0 1 1 -.1 0M1590 345l5 5" stroke="#363636" stroke-width="1.2" fill="none"/><path d="M1583 356h4l-2 2z" stroke="#363636" stroke-width="1" fill="none"/><path d="M1585 364v22M1585 364l-3 4h6zM1577 375a8 4 0 1 0 16 0a8 4 0 1 0 -16 0" stroke="#363636" stroke-width="1.2" fill="none"/><path d="M1583 393h4l-2 2z" stroke="#363636" stroke-width="1" fill="none"/><path d="M1577 410h16v12h-16zM1580 410v-5h10v5M1577 416h16" stroke="#363636" stroke-width="1.2" fill="none"/><path d="M1583 432h4l-2 2z" stroke="#363636" stroke-width="1" fill="none"/><path d="M1577 443h5v5h-5zM1584 443h5v5h-5zM1591 443h5v5h-5zM1577 451h16v14h-16zM1582 454l6 4-6 4z" stroke="#363636" stroke-width="1.2" fill="none"/><path d="M1594 211l5 5M1599 211l-5 5" stroke="#363636" stroke-width="1" fill="none"/><path d="M1594 480h6l-3 4z" stroke="#363636" stroke-width="1" fill="none"/><path d="M488.5 311.2H969.6V577.8H488.5Z" stroke="#d21ed2" stroke-width="1.6" fill="none" stroke-dasharray="13 3 2 3"/><rect x="564.3" y="238.2" width="47.5" height="21.3" stroke="#dcdc00" stroke-width="1.3" fill="none"/><path d="M569.0 238.2L569.0 259.5" stroke="#dcdc00" stroke-width="1.3"/><path d="M580.0 238.2L580.0 259.5" stroke="#dcdc00" stroke-width="1.3"/><rect x="580.0" y="246.0" width="47.7" height="5.7" stroke="#dcdc00" stroke-width="1.3" fill="none"/><path d="M566.6 259.5L566.6 269.6" stroke="#66d01a" stroke-width="1.6"/><path d="M608.5 259.5L608.5 269.6" stroke="#66d01a" stroke-width="1.6"/><path d="M566.6 269.6V274.8H530.4V305.4" stroke="#e07818" stroke-width="1.6" fill="none"/><path d="M608.5 269.6V274.8H660.8V305.4" stroke="#e07818" stroke-width="1.6" fill="none"/><text transform="translate(560.0 267.5) scale(0.8 1)" fill="#66d01a" font-size="8.5" text-anchor="start">C</text><text transform="translate(601.0 267.5) scale(0.8 1)" fill="#66d01a" font-size="8.5" text-anchor="start">R</text><text transform="translate(531.0 272.0) scale(0.8 1)" fill="#dcdc00" font-size="8.8" text-anchor="start">12x15</text><circle cx="530.4" cy="311.2" r="5.8" stroke="#dcdc00" stroke-width="1.3" fill="none"/><circle cx="660.8" cy="311.2" r="5.8" stroke="#dcdc00" stroke-width="1.3" fill="none"/><circle cx="739.4" cy="311.2" r="5.8" stroke="#dcdc00" stroke-width="1.3" fill="none"/><circle cx="775.6" cy="311.2" r="5.8" stroke="#dcdc00" stroke-width="1.3" fill="none"/><circle cx="896.0" cy="311.2" r="5.8" stroke="#dcdc00" stroke-width="1.3" fill="none"/><circle cx="577.6" cy="577.8" r="5.8" stroke="#dcdc00" stroke-width="1.3" fill="none"/><circle cx="875.0" cy="577.8" r="5.8" stroke="#dcdc00" stroke-width="1.3" fill="none"/><text transform="translate(542.0 296.0) scale(0.8 1)" fill="#dcdc00" font-size="9.2" text-anchor="start">#6 SAE</text><text transform="translate(540.0 303.0) scale(0.8 1)" fill="#14c4d4" font-size="8.5" text-anchor="start">A1</text><text transform="translate(674.0 296.0) scale(0.8 1)" fill="#dcdc00" font-size="9.2" text-anchor="start">#6 SAE</text><text transform="translate(672.0 303.0) scale(0.8 1)" fill="#14c4d4" font-size="8.5" text-anchor="start">B1</text><text transform="translate(751.0 296.0) scale(0.8 1)" fill="#dcdc00" font-size="9.2" text-anchor="start">#6 SAE</text><text transform="translate(749.0 303.0) scale(0.8 1)" fill="#14c4d4" font-size="8.5" text-anchor="start">DR</text><text transform="translate(788.0 296.0) scale(0.8 1)" fill="#dcdc00" font-size="9.2" text-anchor="start">#6 SAE</text><text transform="translate(786.0 303.0) scale(0.8 1)" fill="#14c4d4" font-size="8.5" text-anchor="start">A2</text><text transform="translate(908.0 296.0) scale(0.8 1)" fill="#dcdc00" font-size="9.2" text-anchor="start">#6 SAE</text><text transform="translate(906.0 303.0) scale(0.8 1)" fill="#14c4d4" font-size="8.5" text-anchor="start">B2</text><path d="M530.4 317.0L530.4 331.6" stroke="#e07818" stroke-width="1.6"/><path d="M530.4 331.6L530.4 341.0" stroke="#66d01a" stroke-width="1.6"/><path d="M530.4 341L525.4 342.7L535.4 344.4L525.4 346.09999999999997L535.4 347.79999999999995L525.4 349.5L535.4 351.2L525.4 352.9L535.4 354.59999999999997L525.4 356.3L535.4 358.0" stroke="#dcdc00" stroke-width="1.2" fill="none"/><path d="M524.4 357L530.4 365L536.4 357" stroke="#dcdc00" stroke-width="1.3" fill="none"/><circle cx="530.4" cy="360.5" r="2.7" stroke="#dcdc00" stroke-width="1.2" fill="none"/><path d="M530.4 365.0L530.4 430.5" stroke="#66d01a" stroke-width="1.6"/><path d="M530.4 430.5H577.2V446.4" stroke="#66d01a" stroke-width="1.6" fill="none"/><path d="M530.4 364L543 374V378" stroke="#66d01a" stroke-width="1.2" fill="none"/><text transform="translate(523.0 344.0) scale(0.8 1)" fill="#66d01a" font-size="10" text-anchor="start">1</text><text transform="translate(522.0 386.0) scale(0.8 1)" fill="#66d01a" font-size="10" text-anchor="start">2</text><text transform="translate(535.0 386.0) scale(0.8 1)" fill="#66d01a" font-size="10" text-anchor="start">3</text><rect x="541.6" y="346.1" width="19.8" height="9.7" rx="4.8" stroke="#14c4d4" stroke-width="1.3" fill="none"/><text transform="translate(551.5 353.8) scale(0.8 1)" fill="#20d8e8" font-size="9.2" text-anchor="middle">4</text><text transform="translate(548.8 368.5) scale(0.8 1)" fill="#dcdc00" font-size="9.5" text-anchor="start">CAVT11A</text><text transform="translate(548.8 389.0) scale(0.8 1)" fill="#dcdc00" font-size="8.5" text-anchor="start">3:1</text><path d="M543 378V420.5H660.8" stroke="#e07818" stroke-width="1.6" fill="none" stroke-dasharray="5 3"/><path d="M530.4 410.5H538a5 5 0 0 1 10 0H619.2V399" stroke="#e07818" stroke-width="1.6" fill="none" stroke-dasharray="5 3"/><circle cx="530.4" cy="410.5" r="1.8" fill="#f0f0f0"/><circle cx="660.8" cy="420.5" r="1.8" fill="#f0f0f0"/><path d="M660.8 317.0L660.8 322.0" stroke="#e07818" stroke-width="1.6"/><path d="M661.0 322.0L661.0 352.3" stroke="#66d01a" stroke-width="1.6"/><path d="M661.0 373.2L661.0 430.5" stroke="#66d01a" stroke-width="1.6"/><path d="M661 430.5H587.9V446.4" stroke="#66d01a" stroke-width="1.6" fill="none"/><rect x="608.3" y="331.3" width="100.2" height="63.2" stroke="#dcdc00" stroke-width="1.5" fill="none"/><path d="M661 341.8H697.5V383.6H661" stroke="#66d01a" stroke-width="1.3" fill="none"/><circle cx="661" cy="341.8" r="2.2" fill="#66d01a"/><circle cx="661" cy="383.6" r="2.2" fill="#66d01a"/><path d="M691.5 361l6 7 6-7" stroke="#66d01a" stroke-width="1.3" fill="none"/><circle cx="697.5" cy="364.5" r="2.5" stroke="#66d01a" stroke-width="1.2" fill="none"/><rect x="650.4" y="352.3" width="21.1" height="20.9" stroke="#dcdc00" stroke-width="1.3" fill="none"/><path d="M655.4 352.3V371M653 366l2.4 5 2.4-5" stroke="#66d01a" stroke-width="1.1" fill="none"/><path d="M671.5 363L673 349L675 363L676 349L678 363L679 349L681 363L682 349L684 363" stroke="#dcdc00" stroke-width="1.1" fill="none"/><path d="M675 350L682 371M680 366l2 5 1-5" stroke="#dcdc00" stroke-width="1.1" fill="none"/><path d="M634 362.7L644 367.9L634 373.2Z" fill="#c0c0c0" stroke="#dcdc00" stroke-width="1"/><path d="M636.0 362.7L650.4 362.7" stroke="#dcdc00" stroke-width="1.1"/><path d="M619.2 399V368H634" stroke="#66d01a" stroke-width="1.3" fill="none" stroke-dasharray="3 2"/><path d="M650.4 357.5H639.7V341.8H649.7L660 351.4" stroke="#66d01a" stroke-width="1.3" fill="none" stroke-dasharray="3 2"/><path d="M665.4 376.7Q667 379.3 670 379.3H684.6V357.5" stroke="#66d01a" stroke-width="1.3" fill="none" stroke-dasharray="3 2"/><text transform="translate(656.0 329.0) scale(0.8 1)" fill="#66d01a" font-size="10" text-anchor="start">1</text><text transform="translate(655.0 401.0) scale(0.8 1)" fill="#66d01a" font-size="10" text-anchor="start">2</text><text transform="translate(613.0 401.0) scale(0.8 1)" fill="#66d01a" font-size="10" text-anchor="start">3</text><rect x="714.5" y="358.3" width="19.4" height="9.7" rx="4.8" stroke="#14c4d4" stroke-width="1.3" fill="none"/><text transform="translate(724.2 366.0) scale(0.8 1)" fill="#20d8e8" font-size="9.2" text-anchor="middle">13</text><text transform="translate(722.2 380.5) scale(0.8 1)" fill="#dcdc00" font-size="9.5" text-anchor="start">T-11A</text><text transform="translate(722.2 400.5) scale(0.8 1)" fill="#dcdc00" font-size="8.5" text-anchor="start">10:1</text><circle cx="838.6" cy="254.0" r="15.5" stroke="#dcdc00" stroke-width="1.5" fill="none"/><path d="M826 248L835 254L826 260Z M851 248L842 254L851 260Z" fill="#c8c8c8" stroke="#dcdc00" stroke-width="1"/><path d="M813.0 254.0L823.0 254.0" stroke="#66d01a" stroke-width="1.6"/><path d="M854.0 254.0L863.4 254.0" stroke="#66d01a" stroke-width="1.6"/><path d="M813 254H775.6V305.4" stroke="#e07818" stroke-width="1.6" fill="none"/><path d="M863.4 254H896V268.6" stroke="#e07818" stroke-width="1.6" fill="none"/><path d="M896 268.6Q886 279.5 896 290.5" stroke="#66d01a" stroke-width="1.5" fill="none"/><circle cx="896" cy="268.6" r="2.2" fill="#66d01a"/><circle cx="896" cy="290.5" r="2.2" fill="#66d01a"/><path d="M896.0 290.5L896.0 305.4" stroke="#e07818" stroke-width="1.6"/><rect x="862.4" y="276.4" width="25.2" height="11.0" rx="0.0" stroke="#14c4d4" stroke-width="1.3" fill="none"/><text transform="translate(875.0 285.4) scale(0.8 1)" fill="#20d8e8" font-size="10.4" text-anchor="middle">16.2</text><text transform="translate(816.0 251.0) scale(0.8 1)" fill="#66d01a" font-size="9" text-anchor="start">P</text><text transform="translate(855.0 251.0) scale(0.8 1)" fill="#66d01a" font-size="9" text-anchor="start">P1</text><text transform="translate(813.0 272.0) scale(0.8 1)" fill="#66d01a" font-size="9" text-anchor="start">DR</text><path d="M813 274.4H780.6a5 5 0 0 0 -10 0H739.4V305.4" stroke="#1c98d6" stroke-width="1.6" fill="none" stroke-dasharray="5 3"/><path d="M739.4 317V488.6" stroke="#1c98d6" stroke-width="1.6" fill="none" stroke-dasharray="5 3"/><path d="M822 270L828 265" stroke="#66d01a" stroke-width="1" fill="none"/><path d="M775.6 317.0L775.6 325.8" stroke="#e07818" stroke-width="1.6"/><path d="M775.6 325.8L775.6 341.0" stroke="#66d01a" stroke-width="1.6"/><path d="M775.6 341L770.6 342.7L780.6 344.4L770.6 346.09999999999997L780.6 347.79999999999995L770.6 349.5L780.6 351.2L770.6 352.9L780.6 354.59999999999997L770.6 356.3L780.6 358.0" stroke="#dcdc00" stroke-width="1.2" fill="none"/><path d="M769.6 357L775.6 365L781.6 357" stroke="#dcdc00" stroke-width="1.3" fill="none"/><circle cx="775.6" cy="360.5" r="2.7" stroke="#dcdc00" stroke-width="1.2" fill="none"/><path d="M775.6 365.0L775.6 378.0" stroke="#66d01a" stroke-width="1.6"/><path d="M775.6 378.0L775.6 431.5" stroke="#e07818" stroke-width="1.6"/><path d="M775.6 364L788.2 374V379" stroke="#66d01a" stroke-width="1.2" fill="none"/><text transform="translate(768.6 336.0) scale(0.8 1)" fill="#66d01a" font-size="10" text-anchor="start">1</text><text transform="translate(767.6 383.0) scale(0.8 1)" fill="#66d01a" font-size="10" text-anchor="start">2</text><text transform="translate(779.6 383.0) scale(0.8 1)" fill="#66d01a" font-size="10" text-anchor="start">3</text><rect x="784.1" y="341.3" width="26.0" height="9.7" rx="4.8" stroke="#14c4d4" stroke-width="1.3" fill="none"/><text transform="translate(797.1 349.0) scale(0.8 1)" fill="#20d8e8" font-size="9.2" text-anchor="middle">17.1</text><text transform="translate(795.6 364.0) scale(0.8 1)" fill="#dcdc00" font-size="11" text-anchor="start">T-2A</text><text transform="translate(795.1 384.0) scale(0.8 1)" fill="#dcdc00" font-size="8.5" text-anchor="start">3:1</text><path d="M896.0 317.0L896.0 325.8" stroke="#e07818" stroke-width="1.6"/><path d="M896.0 325.8L896.0 341.0" stroke="#66d01a" stroke-width="1.6"/><path d="M896 341L891 342.7L901 344.4L891 346.09999999999997L901 347.79999999999995L891 349.5L901 351.2L891 352.9L901 354.59999999999997L891 356.3L901 358.0" stroke="#dcdc00" stroke-width="1.2" fill="none"/><path d="M890 357L896 365L902 357" stroke="#dcdc00" stroke-width="1.3" fill="none"/><circle cx="896.0" cy="360.5" r="2.7" stroke="#dcdc00" stroke-width="1.2" fill="none"/><path d="M896.0 365.0L896.0 378.0" stroke="#66d01a" stroke-width="1.6"/><path d="M896.0 378.0L896.0 431.5" stroke="#e07818" stroke-width="1.6"/><path d="M896 364L908.6 374V379" stroke="#66d01a" stroke-width="1.2" fill="none"/><text transform="translate(889.0 336.0) scale(0.8 1)" fill="#66d01a" font-size="10" text-anchor="start">1</text><text transform="translate(888.0 383.0) scale(0.8 1)" fill="#66d01a" font-size="10" text-anchor="start">2</text><text transform="translate(900.0 383.0) scale(0.8 1)" fill="#66d01a" font-size="10" text-anchor="start">3</text><rect x="904.5" y="341.3" width="26.0" height="9.7" rx="4.8" stroke="#14c4d4" stroke-width="1.3" fill="none"/><text transform="translate(917.5 349.0) scale(0.8 1)" fill="#20d8e8" font-size="9.2" text-anchor="middle">17.2</text><text transform="translate(916.0 364.0) scale(0.8 1)" fill="#dcdc00" font-size="11" text-anchor="start">T-2A</text><text transform="translate(915.5 384.0) scale(0.8 1)" fill="#dcdc00" font-size="8.5" text-anchor="start">3:1</text><path d="M788.2 379V400.4H896" stroke="#e07818" stroke-width="1.6" fill="none" stroke-dasharray="5 3"/><circle cx="896" cy="400.4" r="1.8" fill="#f0f0f0"/><path d="M909 379V416H901a5 5 0 0 0 -10 0H776.2" stroke="#e07818" stroke-width="1.6" fill="none" stroke-dasharray="5 3"/><circle cx="776.2" cy="416" r="1.8" fill="#f0f0f0"/><path d="M775.6 431.5H833.7V447" stroke="#e07818" stroke-width="1.6" fill="none"/><path d="M896 431.5H843.4V447" stroke="#e07818" stroke-width="1.6" fill="none"/><path d="M552 446.4H612.9M535.2 467.9H630.1M535.2 457V467.9M630.1 457V467.9M535.2 457H552M612.9 457H630.1M552 446.4V467.9M612.9 446.4V467.9M571.9 446.4V467.9M592.2 446.4V467.9M593.7 446.4V467.9M570.5 446.4V467.9" stroke="#dcdc00" stroke-width="1.3" fill="none"/><path d="M541 467.9L546 457M615.6 457L624.2 467.9" stroke="#dcdc00" stroke-width="1.2" fill="none"/><path d="M538 457L539.7 446.4L541.4 457L543.1 446.4L544.8 457L546.5 446.4L548.1999999999999 457L549.9000000000001 446.4L551.6 457" stroke="#dcdc00" stroke-width="1.1" fill="none"/><path d="M617 457L618.7 446.4L620.4 457L622.1 446.4L623.8 457L625.5 446.4L627.1999999999999 457L628.9000000000001 446.4L630.6 457" stroke="#dcdc00" stroke-width="1.1" fill="none"/><path d="M556.2 446.4L567.2 467.9M567.2 446.4L556.2 467.9" stroke="#66d01a" stroke-width="1.2" fill="none"/><path d="M577.2 430.5V457H587.9M587.9 430.5V477.7M577.2 467.9V462M574 462H580" stroke="#66d01a" stroke-width="1.3" fill="none"/><path d="M598.4 467.9V447.5M596 452l2.4-5 2.4 5M608.6 446.4V466.5M606.2 461l2.4 5 2.4-5" stroke="#66d01a" stroke-width="1.2" fill="none"/><path d="M577.2 467.9L577.2 477.7" stroke="#66d01a" stroke-width="1.3"/><text transform="translate(529.0 463.0) scale(0.8 1)" fill="#dcdc00" font-size="8.5" text-anchor="start">a</text><text transform="translate(634.0 463.0) scale(0.8 1)" fill="#dcdc00" font-size="8.5" text-anchor="start">b</text><text transform="translate(572.0 443.5) scale(0.8 1)" fill="#66d01a" font-size="9" text-anchor="start">A</text><text transform="translate(581.5 443.5) scale(0.8 1)" fill="#66d01a" font-size="9" text-anchor="start">B</text><text transform="translate(571.0 476.5) scale(0.8 1)" fill="#66d01a" font-size="9" text-anchor="start">P</text><text transform="translate(581.5 476.5) scale(0.8 1)" fill="#66d01a" font-size="9" text-anchor="start">T</text><text transform="translate(541.0 477.0) scale(0.8 1)" fill="#dcdc00" font-size="9" text-anchor="start">S1</text><text transform="translate(540.5 483.5) scale(0.8 1)" fill="#dcdc00" font-size="9" text-anchor="start">Open</text><text transform="translate(619.0 477.0) scale(0.8 1)" fill="#dcdc00" font-size="9" text-anchor="start">S2</text><text transform="translate(618.5 483.5) scale(0.8 1)" fill="#dcdc00" font-size="9" text-anchor="start">Close</text><text transform="translate(651.5 473.5) scale(0.8 1)" fill="#dcdc00" font-size="8" text-anchor="start">D03</text><path d="M808 446.4H868.9M791.2 467.9H886.1M791.2 457V467.9M886.1 457V467.9M791.2 457H808M868.9 457H886.1M808 446.4V467.9M868.9 446.4V467.9M827.9 446.4V467.9M848.2 446.4V467.9M849.7 446.4V467.9M826.5 446.4V467.9" stroke="#dcdc00" stroke-width="1.3" fill="none"/><path d="M797 467.9L802 457M871.6 457L880.2 467.9" stroke="#dcdc00" stroke-width="1.2" fill="none"/><path d="M794 457L795.7 446.4L797.4 457L799.1 446.4L800.8 457L802.5 446.4L804.1999999999999 457L805.9000000000001 446.4L807.6 457" stroke="#dcdc00" stroke-width="1.1" fill="none"/><path d="M873 457L874.7 446.4L876.4 457L878.1 446.4L879.8 457L881.5 446.4L883.1999999999999 457L884.9000000000001 446.4L886.6 457" stroke="#dcdc00" stroke-width="1.1" fill="none"/><path d="M812.2 446.4L823.2 467.9M823.2 446.4L812.2 467.9" stroke="#66d01a" stroke-width="1.2" fill="none"/><path d="M833.2 436V457H843.9M843.9 436V477.7M833.2 467.9V462M830 462H836" stroke="#66d01a" stroke-width="1.3" fill="none"/><path d="M854.4 467.9V447.5M852 452l2.4-5 2.4 5M864.6 446.4V466.5M862.2 461l2.4 5 2.4-5" stroke="#66d01a" stroke-width="1.2" fill="none"/><path d="M833.2 467.9L833.2 477.7" stroke="#66d01a" stroke-width="1.3"/><text transform="translate(785.0 463.0) scale(0.8 1)" fill="#dcdc00" font-size="8.5" text-anchor="start">a</text><text transform="translate(890.0 463.0) scale(0.8 1)" fill="#dcdc00" font-size="8.5" text-anchor="start">b</text><text transform="translate(828.0 443.5) scale(0.8 1)" fill="#66d01a" font-size="9" text-anchor="start">A</text><text transform="translate(837.5 443.5) scale(0.8 1)" fill="#66d01a" font-size="9" text-anchor="start">B</text><text transform="translate(827.0 476.5) scale(0.8 1)" fill="#66d01a" font-size="9" text-anchor="start">P</text><text transform="translate(837.5 476.5) scale(0.8 1)" fill="#66d01a" font-size="9" text-anchor="start">T</text><text transform="translate(797.0 477.0) scale(0.8 1)" fill="#dcdc00" font-size="9" text-anchor="start">S1</text><text transform="translate(796.5 483.5) scale(0.8 1)" fill="#dcdc00" font-size="9" text-anchor="start">Open</text><text transform="translate(875.0 477.0) scale(0.8 1)" fill="#dcdc00" font-size="9" text-anchor="start">S2</text><text transform="translate(874.5 483.5) scale(0.8 1)" fill="#dcdc00" font-size="9" text-anchor="start">Close</text><text transform="translate(907.5 473.5) scale(0.8 1)" fill="#dcdc00" font-size="8" text-anchor="start">D03</text><rect x="642.6" y="451.0" width="26.2" height="11.8" rx="5.9" stroke="#14c4d4" stroke-width="1.3" fill="none"/><text transform="translate(655.7 460.8) scale(0.8 1)" fill="#20d8e8" font-size="11.2" text-anchor="middle">8.1</text><rect x="898.6" y="452.0" width="26.2" height="11.5" rx="5.8" stroke="#14c4d4" stroke-width="1.3" fill="none"/><text transform="translate(911.7 461.5) scale(0.8 1)" fill="#20d8e8" font-size="10.9" text-anchor="middle">8.2</text><path d="M577.6 477.7L577.6 572.0" stroke="#e07818" stroke-width="1.6"/><path d="M587.6 477.7V488.6H828.7a5 5 0 0 1 10 0H844" stroke="#1c98d6" stroke-width="1.6" fill="none"/><circle cx="739.2" cy="488.6" r="1.8" fill="#f0f0f0"/><circle cx="844" cy="488.6" r="1.8" fill="#f0f0f0"/><path d="M833.7 477.7V499.3H577.6" stroke="#e07818" stroke-width="1.6" fill="none"/><circle cx="577.6" cy="499.3" r="1.8" fill="#f0f0f0"/><circle cx="691.9" cy="499.3" r="1.8" fill="#f0f0f0"/><path d="M844 477.7V566.5H692V562.3" stroke="#1c98d6" stroke-width="1.6" fill="none"/><circle cx="844" cy="566.5" r="1.8" fill="#f0f0f0"/><path d="M844 566.5H875V572" stroke="#1c98d6" stroke-width="1.6" fill="none"/><path d="M691.9 499.3L691.9 525.0" stroke="#e07818" stroke-width="1.6"/><rect x="681.2" y="525.0" width="21.4" height="21.8" stroke="#dcdc00" stroke-width="1.3" fill="none"/><path d="M686 527V543M683.5 538l2.5 5 2.5-5" stroke="#66d01a" stroke-width="1.2" fill="none"/><path d="M702.6 533L704.5 521L706.0 533L707.3 521L708.8 533L710.1 521L711.6 533L712.9 521L714.4 533" stroke="#dcdc00" stroke-width="1.1" fill="none"/><path d="M704 520L712 545M709 540l3 5 0-5" stroke="#dcdc00" stroke-width="1.1" fill="none"/><path d="M691.9 525V546.8" stroke="#66d01a" stroke-width="1.3" fill="none"/><path d="M686 521L691 527M680 521H676V530H681" stroke="#66d01a" stroke-width="1.2" fill="none" stroke-dasharray="3 2"/><path d="M691.9 546.8L691.9 562.3" stroke="#66d01a" stroke-width="1.6"/><text transform="translate(688.0 519.0) scale(0.8 1)" fill="#66d01a" font-size="10" text-anchor="start">2</text><text transform="translate(698.0 518.0) scale(0.8 1)" fill="#dcdc00" font-size="8.5" text-anchor="start">180</text><text transform="translate(688.0 560.0) scale(0.8 1)" fill="#66d01a" font-size="10" text-anchor="start">1</text><rect x="720.0" y="531.0" width="25.0" height="10.0" rx="5.0" stroke="#14c4d4" stroke-width="1.3" fill="none"/><text transform="translate(732.5 539.0) scale(0.8 1)" fill="#20d8e8" font-size="9.5" text-anchor="middle">14</text><path d="M577.6 499.3L577.6 510.0" stroke="#e07818" stroke-width="1.6"/><path d="M577.6 510.0L577.6 521.6" stroke="#66d01a" stroke-width="1.6"/><path d="M577.6 521.6L572.6 523.3000000000001L582.6 525.0L572.6 526.7L582.6 528.4L572.6 530.1L582.6 531.8L572.6 533.5000000000001L582.6 535.2L572.6 536.9000000000001L582.6 538.6" stroke="#dcdc00" stroke-width="1.2" fill="none"/><path d="M571.6 537.6L577.6 545.6L583.6 537.6" stroke="#dcdc00" stroke-width="1.3" fill="none"/><circle cx="577.6" cy="541.1" r="2.7" stroke="#dcdc00" stroke-width="1.2" fill="none"/><path d="M577.6 545.6L577.6 551.6" stroke="#66d01a" stroke-width="1.6"/><text transform="translate(571.0 522.0) scale(0.8 1)" fill="#66d01a" font-size="10" text-anchor="start">2</text><text transform="translate(571.0 549.0) scale(0.8 1)" fill="#66d01a" font-size="10" text-anchor="start">1</text><rect x="588.2" y="531.3" width="19.8" height="9.7" rx="4.9" stroke="#14c4d4" stroke-width="1.3" fill="none"/><text transform="translate(598.1 539.0) scale(0.8 1)" fill="#20d8e8" font-size="9.2" text-anchor="middle">7</text><text transform="translate(597.0 553.5) scale(0.8 1)" fill="#dcdc00" font-size="9.5" text-anchor="start">C10-2</text><rect x="940.3" y="563.3" width="22.3" height="10.7" rx="5.4" stroke="#14c4d4" stroke-width="1.3" fill="none"/><text transform="translate(951.5 572.0) scale(0.8 1)" fill="#20d8e8" font-size="10.2" text-anchor="middle">1</text><text transform="translate(588.6 592.0) scale(0.8 1)" fill="#14c4d4" font-size="8" text-anchor="start">P</text><text transform="translate(588.0 599.0) scale(0.8 1)" fill="#dcdc00" font-size="9" text-anchor="start">3/4" Code 62</text><text transform="translate(889.0 591.0) scale(0.8 1)" fill="#14c4d4" font-size="8" text-anchor="start">T</text><text transform="translate(824.0 599.0) scale(0.8 1)" fill="#dcdc00" font-size="9" text-anchor="start">3/4" Code 61</text><path d="M577.6 583.6V630H765.2V671.8" stroke="#e07818" stroke-width="1.6" fill="none"/><path d="M765.2 671.8Q755 682.3 765.2 692.9" stroke="#66d01a" stroke-width="1.5" fill="none"/><circle cx="765.2" cy="671.8" r="2.2" fill="#66d01a"/><circle cx="765.2" cy="692.9" r="2.2" fill="#66d01a"/><path d="M765.2 692.9V827.9H635" stroke="#e07818" stroke-width="1.6" fill="none"/><rect x="772.4" y="678.4" width="24.7" height="10.5" rx="0.0" stroke="#14c4d4" stroke-width="1.3" fill="none"/><text transform="translate(784.8 686.9) scale(0.8 1)" fill="#20d8e8" font-size="10.0" text-anchor="middle">16.1</text><path d="M875 583.6V608.8H974.6V624.7" stroke="#1c98d6" stroke-width="1.6" fill="none"/><path d="M974.6 624.7Q964 635 974.6 645.4" stroke="#66d01a" stroke-width="1.5" fill="none"/><circle cx="974.6" cy="624.7" r="2.2" fill="#66d01a"/><circle cx="974.6" cy="645.4" r="2.2" fill="#66d01a"/><path d="M974.6 645.4V827.9H828.4V880.5H640" stroke="#1c98d6" stroke-width="1.6" fill="none"/><rect x="935.8" y="631.3" width="25.0" height="10.8" rx="0.0" stroke="#14c4d4" stroke-width="1.3" fill="none"/><text transform="translate(948.3 640.1) scale(0.8 1)" fill="#20d8e8" font-size="10.3" text-anchor="middle">16.3</text><path d="M504.1 771.3H995.7" stroke="#dcdc00" stroke-width="1.6" fill="none"/><path d="M514.9 771.3V917H504.1" stroke="#dcdc00" stroke-width="1.6" fill="none"/><path d="M514.9 907H984.8" stroke="#dcdc00" stroke-width="1.6" fill="none"/><path d="M984.8 771.2V916.8H995.7" stroke="#dcdc00" stroke-width="1.6" fill="none"/><rect x="947.6" y="891.4" width="22.4" height="10.6" rx="5.3" stroke="#14c4d4" stroke-width="1.3" fill="none"/><text transform="translate(958.8 900.0) scale(0.8 1)" fill="#20d8e8" font-size="10.1" text-anchor="middle">15</text><path d="M509.8 708.5A15.5 15.5 0 0 1 540.8 708.5" stroke="#dcdc00" stroke-width="1.4" fill="none"/><path d="M525.3 708.5L525.3 725.0" stroke="#66d01a" stroke-width="1.6"/><path d="M525.3 725L540.3 739.5L525.3 754L510.3 739.5Z" stroke="#dcdc00" stroke-width="1.4" fill="none"/><path d="M512 739.5H539" stroke="#dcdc00" stroke-width="1.2" fill="none" stroke-dasharray="3 2"/><path d="M525.3 754.0L525.3 771.0" stroke="#66d01a" stroke-width="1.6"/><path d="M525.3 771.0L525.3 885.5" stroke="#1c98d6" stroke-width="1.6"/><rect x="513.9" y="677.0" width="22.7" height="10.6" rx="5.3" stroke="#14c4d4" stroke-width="1.3" fill="none"/><text transform="translate(525.2 685.6) scale(0.8 1)" fill="#20d8e8" font-size="10.1" text-anchor="middle">3</text><rect x="545.3" y="677.0" width="22.3" height="10.6" rx="5.3" stroke="#14c4d4" stroke-width="1.3" fill="none"/><text transform="translate(556.5 685.6) scale(0.8 1)" fill="#20d8e8" font-size="10.1" text-anchor="middle">5</text><circle cx="556.3" cy="728.9" r="11.0" stroke="#dcdc00" stroke-width="1.4" fill="none"/><circle cx="556.3" cy="750.2" r="11.0" stroke="#dcdc00" stroke-width="1.4" fill="none"/><path d="M556.3 721.0L556.3 734.0" stroke="#dcdc00" stroke-width="1.1"/><circle cx="556.3" cy="734.5" r="1.8" fill="#c8c8c8"/><path d="M545.3 750.2H567.3M551 747Q556.3 743 561.6 747Z" stroke="#dcdc00" stroke-width="1.1" fill="none"/><path d="M556.3 761.0L556.3 771.0" stroke="#66d01a" stroke-width="1.6"/><path d="M556.3 771.0L556.3 865.5" stroke="#1c98d6" stroke-width="1.6"/><circle cx="608.8" cy="755.0" r="15.5" stroke="#dcdc00" stroke-width="1.5" fill="none"/><path d="M602 762V748L608.8 756L615.6 748V762" stroke="#dcdc00" stroke-width="1.3" fill="none"/><rect x="597.6" y="718.6" width="22.3" height="10.9" rx="5.4" stroke="#14c4d4" stroke-width="1.3" fill="none"/><text transform="translate(608.8 727.5) scale(0.8 1)" fill="#20d8e8" font-size="10.4" text-anchor="middle">11</text><rect x="634.0" y="755.0" width="22.7" height="11.0" rx="5.5" stroke="#14c4d4" stroke-width="1.3" fill="none"/><text transform="translate(645.4 764.0) scale(0.8 1)" fill="#20d8e8" font-size="10.4" text-anchor="middle">10</text><text transform="translate(572.4 759.0) scale(0.8 1)" fill="#dcdc00" font-size="9" text-anchor="start">37.3 kW</text><path d="M593.4 772.2L598.6 814M624.8 772.2L619.5 814" stroke="#dcdc00" stroke-width="1.3" fill="none"/><rect x="599.5" y="784.4" width="18.8" height="7.1" stroke="#dcdc00" stroke-width="1.2" fill="none"/><rect x="599.5" y="794.0" width="18.8" height="6.5" stroke="#dcdc00" stroke-width="1.2" fill="none"/><path d="M605 772V784.4M612 772V784.4M605 800.5V813M612 800.5V813" stroke="#dcdc00" stroke-width="1.2" fill="none"/><rect x="566.0" y="791.7" width="22.7" height="11.0" rx="5.5" stroke="#14c4d4" stroke-width="1.3" fill="none"/><text transform="translate(577.4 800.7) scale(0.8 1)" fill="#20d8e8" font-size="10.4" text-anchor="middle">12</text><circle cx="608.6" cy="828.9" r="15.7" stroke="#dcdc00" stroke-width="1.5" fill="none"/><path d="M615 822L624 828.9L615 836Z" fill="#c8c8c8" stroke="#dcdc00" stroke-width="1"/><path d="M582.0 828.5L593.0 828.5" stroke="#66d01a" stroke-width="1.6"/><path d="M624.3 828.5L635.0 828.5" stroke="#66d01a" stroke-width="1.6"/><path d="M582 828.5H566.7V854" stroke="#1c98d6" stroke-width="1.6" fill="none"/><path d="M566.7 854.0L566.7 866.0" stroke="#66d01a" stroke-width="1.6"/><path d="M566.7 866L581.5 880.7L566.7 895.5L551.9 880.7Z" stroke="#dcdc00" stroke-width="1.4" fill="none"/><path d="M553.5 880.7H580" stroke="#dcdc00" stroke-width="1.2" fill="none" stroke-dasharray="3 2"/><rect x="587.0" y="875.4" width="22.6" height="10.6" rx="5.3" stroke="#14c4d4" stroke-width="1.3" fill="none"/><text transform="translate(598.3 884.0) scale(0.8 1)" fill="#20d8e8" font-size="10.1" text-anchor="middle">6</text><rect x="623.4" y="839.3" width="22.3" height="10.5" rx="5.2" stroke="#14c4d4" stroke-width="1.3" fill="none"/><text transform="translate(634.5 847.8) scale(0.8 1)" fill="#20d8e8" font-size="10.0" text-anchor="middle">9</text><text transform="translate(586.0 827.0) scale(0.8 1)" fill="#66d01a" font-size="9" text-anchor="start">S</text><text transform="translate(627.5 827.0) scale(0.8 1)" fill="#66d01a" font-size="9" text-anchor="start">P</text><path d="M620 849Q608 856 597 850" stroke="#dcdc00" stroke-width="1.3" fill="none"/><path d="M596 846L602 851L595 852Z" fill="#dcdc00"/><path d="M473.0 891.1L483.2 891.1" stroke="#66d01a" stroke-width="1.6"/><path d="M504.5 891.1L515.0 891.1" stroke="#66d01a" stroke-width="1.6"/><circle cx="473" cy="891.1" r="1.5" fill="#e03010"/><path d="M483.2 886.5L504.5 895.7V886.5L483.2 895.7Z" stroke="#dcdc00" stroke-width="1.3" fill="none"/><path d="M494 891.1V880.3M488.5 880.3H499.5" stroke="#dcdc00" stroke-width="1.3" fill="none"/><rect x="482.7" y="867.8" width="22.3" height="10.8" rx="5.4" stroke="#14c4d4" stroke-width="1.3" fill="none"/><text transform="translate(493.9 876.6) scale(0.8 1)" fill="#20d8e8" font-size="10.3" text-anchor="middle">2</text></svg></div></body></html>
